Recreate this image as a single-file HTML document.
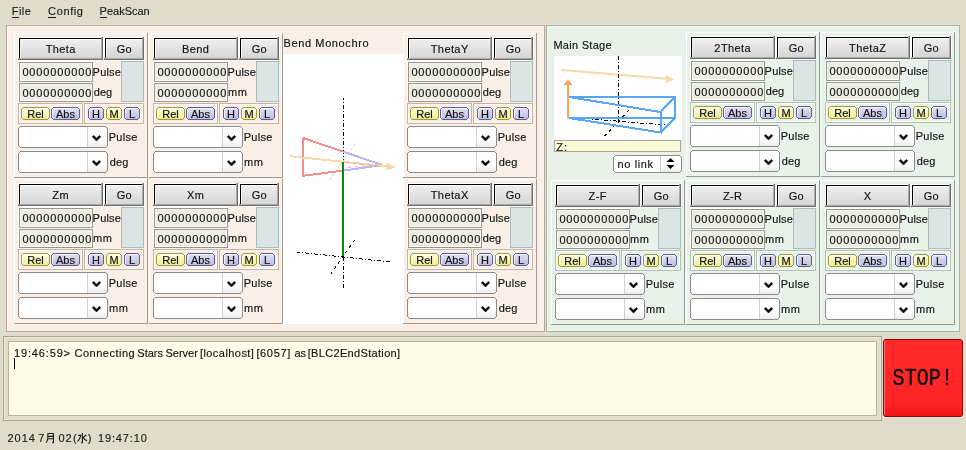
<!DOCTYPE html>
<html><head><meta charset="utf-8"><title>Stars Motor Control</title>
<style>html,body{margin:0;padding:0;background:#dfdcca;width:966px;height:450px;overflow:hidden;}svg{display:block;will-change:transform;}</style>
</head><body>
<svg width="966" height="450" viewBox="0 0 966 450" font-family='"Liberation Sans", sans-serif' shape-rendering="auto"><defs>
<linearGradient id="gBtn" x1="0" y1="0" x2="0" y2="1"><stop offset="0" stop-color="#f1f1f1"/><stop offset="1" stop-color="#d3d3d3"/></linearGradient>
<linearGradient id="gYel" x1="0" y1="0" x2="0" y2="1"><stop offset="0" stop-color="#fdfde2"/><stop offset="1" stop-color="#eeec98"/></linearGradient>
<linearGradient id="gBlu" x1="0" y1="0" x2="0" y2="1"><stop offset="0" stop-color="#e2e2f2"/><stop offset="1" stop-color="#bebedd"/></linearGradient>
<linearGradient id="gCmb" x1="0" y1="0" x2="0" y2="1"><stop offset="0" stop-color="#ffffff"/><stop offset="0.6" stop-color="#ffffff"/><stop offset="1" stop-color="#ececec"/></linearGradient>
<linearGradient id="gStop" x1="0" y1="0" x2="0" y2="1"><stop offset="0" stop-color="#ff2b2b"/><stop offset="0.85" stop-color="#ff2424"/><stop offset="1" stop-color="#f31414"/></linearGradient>
</defs><rect x="0" y="0" width="966" height="450" fill="#dfdcca"/>
<text x="11.8" y="15" font-size="11" fill="#1a1a1a" stroke="#1a1a1a" stroke-width="0.15" letter-spacing="0.43">File</text>
<text x="48.1" y="15" font-size="11" fill="#1a1a1a" stroke="#1a1a1a" stroke-width="0.15" letter-spacing="0.62">Config</text>
<text x="99.6" y="15" font-size="11" fill="#1a1a1a" stroke="#1a1a1a" stroke-width="0.15" letter-spacing="0">PeakScan</text>
<rect x="12" y="17" width="7" height="1" fill="#1a1a1a"/>
<rect x="48" y="17" width="8" height="1" fill="#1a1a1a"/>
<rect x="100" y="17" width="7" height="1" fill="#1a1a1a"/>
<rect x="6" y="24" width="954" height="1" fill="#e4e0d0"/>
<rect x="6" y="25" width="539" height="307" fill="#baa89b"/>
<rect x="7" y="26" width="537" height="305" fill="#fcf4ec"/>
<rect x="8" y="27" width="535" height="303" fill="#f9efe6"/>
<rect x="546" y="25" width="414" height="307" fill="#a3b5a9"/>
<rect x="547" y="26" width="412" height="305" fill="#eef7ee"/>
<rect x="548" y="27" width="410" height="303" fill="#e9f2e9"/>
<rect x="14" y="33" width="134" height="145" fill="#a59a91"/>
<rect x="14" y="33" width="133" height="144" fill="#ffffff"/>
<rect x="15" y="34" width="132" height="143" fill="#f9efe6"/>
<rect x="18" y="37" width="86" height="24" fill="rgba(255,255,255,0.55)"/>
<rect x="18" y="37" width="85" height="23" fill="#ffffff"/>
<rect x="19" y="38" width="84" height="22" fill="url(#gBtn)"/>
<rect x="19" y="38" width="82" height="1" fill="#000000"/>
<rect x="19" y="38" width="1" height="20" fill="#000000"/>
<rect x="20" y="39" width="81" height="1" fill="#ffffff"/>
<rect x="20" y="39" width="1" height="19" fill="#f4f4f4"/>
<rect x="101" y="37" width="1" height="23" fill="#a9a9a9"/>
<rect x="18" y="58" width="85" height="1" fill="#a9a9a9"/>
<rect x="102" y="37" width="1" height="23" fill="#6f6f6f"/>
<rect x="18" y="59" width="85" height="1" fill="#6f6f6f"/>
<text x="60.7" y="53" font-size="11" fill="#111111" stroke="#111111" stroke-width="0.15" text-anchor="middle" letter-spacing="0.4">Theta</text>
<rect x="104" y="37" width="41" height="24" fill="rgba(255,255,255,0.55)"/>
<rect x="104" y="37" width="40" height="23" fill="#ffffff"/>
<rect x="105" y="38" width="39" height="22" fill="url(#gBtn)"/>
<rect x="105" y="38" width="37" height="1" fill="#000000"/>
<rect x="105" y="38" width="1" height="20" fill="#000000"/>
<rect x="106" y="39" width="36" height="1" fill="#ffffff"/>
<rect x="106" y="39" width="1" height="19" fill="#f4f4f4"/>
<rect x="142" y="37" width="1" height="23" fill="#a9a9a9"/>
<rect x="104" y="58" width="40" height="1" fill="#a9a9a9"/>
<rect x="143" y="37" width="1" height="23" fill="#6f6f6f"/>
<rect x="104" y="59" width="40" height="1" fill="#6f6f6f"/>
<text x="124.2" y="53" font-size="11" fill="#111111" stroke="#111111" stroke-width="0.15" text-anchor="middle" letter-spacing="0">Go</text>
<rect x="18" y="61" width="75" height="21" fill="#ffffff"/>
<rect x="19" y="62" width="74" height="20" fill="#9d948b"/>
<rect x="20" y="63" width="72" height="18" fill="#ffffff"/>
<rect x="20" y="63" width="71" height="17" fill="#f4f0ea"/>
<rect x="21" y="64" width="70" height="16" fill="#edede4"/>
<text x="22.4" y="76" font-size="11" fill="#111111" stroke="#111111" stroke-width="0.15" letter-spacing="0.86">0000000000</text>
<rect x="18" y="82" width="75" height="20" fill="#ffffff"/>
<rect x="19" y="83" width="74" height="19" fill="#9d948b"/>
<rect x="20" y="84" width="72" height="17" fill="#ffffff"/>
<rect x="20" y="84" width="71" height="16" fill="#f4f0ea"/>
<rect x="21" y="85" width="70" height="15" fill="#edede4"/>
<text x="22.4" y="97" font-size="11" fill="#111111" stroke="#111111" stroke-width="0.15" letter-spacing="0.86">0000000000</text>
<text x="92.6" y="75.7" font-size="11" fill="#111111" stroke="#111111" stroke-width="0.15" letter-spacing="0.2">Pulse</text>
<text x="93.7" y="96.3" font-size="11" fill="#111111" stroke="#111111" stroke-width="0.15" letter-spacing="0.1">deg</text>
<rect x="121" y="61" width="23" height="41" fill="#aabdbd"/>
<rect x="122" y="62" width="21" height="39" fill="#dce5e5"/>
<rect x="18" y="103" width="65" height="21" fill="#c4b3a6"/>
<rect x="19" y="104" width="63" height="19" fill="#fffaf3"/>
<rect x="20" y="105" width="61" height="17" fill="#f9efe6"/>
<rect x="84" y="103" width="60" height="21" fill="#c4b3a6"/>
<rect x="85" y="104" width="58" height="19" fill="#fffaf3"/>
<rect x="86" y="105" width="56" height="17" fill="#f9efe6"/>
<rect x="23" y="107" width="25" height="1" fill="#9c9b34"/>
<rect x="23" y="119" width="25" height="1" fill="#9c9b34"/>
<rect x="21" y="109" width="1" height="9" fill="#9c9b34"/>
<rect x="49" y="109" width="1" height="9" fill="#9c9b34"/>
<rect x="22" y="108" width="1" height="1" fill="#9c9b34"/>
<rect x="48" y="108" width="1" height="1" fill="#9c9b34"/>
<rect x="22" y="118" width="1" height="1" fill="#9c9b34"/>
<rect x="48" y="118" width="1" height="1" fill="#9c9b34"/>
<path d="M23 108H48V109H49V118H48V119H23V118H22V109H23Z" fill="url(#gYel)"/>
<rect x="23" y="108" width="25" height="1" fill="rgba(255,255,255,0.7)"/>
<rect x="22" y="109" width="1" height="9" fill="rgba(255,255,255,0.7)"/>
<text x="35.5" y="118" font-size="11" fill="#101010" stroke="#101010" stroke-width="0.15" text-anchor="middle">Rel</text>
<rect x="53" y="107" width="25" height="1" fill="#5f5f97"/>
<rect x="53" y="119" width="25" height="1" fill="#5f5f97"/>
<rect x="51" y="109" width="1" height="9" fill="#5f5f97"/>
<rect x="79" y="109" width="1" height="9" fill="#5f5f97"/>
<rect x="52" y="108" width="1" height="1" fill="#5f5f97"/>
<rect x="78" y="108" width="1" height="1" fill="#5f5f97"/>
<rect x="52" y="118" width="1" height="1" fill="#5f5f97"/>
<rect x="78" y="118" width="1" height="1" fill="#5f5f97"/>
<path d="M53 108H78V109H79V118H78V119H53V118H52V109H53Z" fill="url(#gBlu)"/>
<rect x="53" y="108" width="25" height="1" fill="rgba(255,255,255,0.7)"/>
<rect x="52" y="109" width="1" height="9" fill="rgba(255,255,255,0.7)"/>
<text x="65.5" y="118" font-size="11" fill="#101010" stroke="#101010" stroke-width="0.15" text-anchor="middle">Abs</text>
<rect x="90" y="107" width="12" height="1" fill="#5f5f97"/>
<rect x="90" y="119" width="12" height="1" fill="#5f5f97"/>
<rect x="88" y="109" width="1" height="9" fill="#5f5f97"/>
<rect x="103" y="109" width="1" height="9" fill="#5f5f97"/>
<rect x="89" y="108" width="1" height="1" fill="#5f5f97"/>
<rect x="102" y="108" width="1" height="1" fill="#5f5f97"/>
<rect x="89" y="118" width="1" height="1" fill="#5f5f97"/>
<rect x="102" y="118" width="1" height="1" fill="#5f5f97"/>
<path d="M90 108H102V109H103V118H102V119H90V118H89V109H90Z" fill="url(#gBlu)"/>
<rect x="90" y="108" width="12" height="1" fill="rgba(255,255,255,0.7)"/>
<rect x="89" y="109" width="1" height="9" fill="rgba(255,255,255,0.7)"/>
<text x="96.0" y="118" font-size="11" fill="#101010" stroke="#101010" stroke-width="0.15" text-anchor="middle">H</text>
<rect x="108" y="107" width="12" height="1" fill="#9c9b34"/>
<rect x="108" y="119" width="12" height="1" fill="#9c9b34"/>
<rect x="106" y="109" width="1" height="9" fill="#9c9b34"/>
<rect x="121" y="109" width="1" height="9" fill="#9c9b34"/>
<rect x="107" y="108" width="1" height="1" fill="#9c9b34"/>
<rect x="120" y="108" width="1" height="1" fill="#9c9b34"/>
<rect x="107" y="118" width="1" height="1" fill="#9c9b34"/>
<rect x="120" y="118" width="1" height="1" fill="#9c9b34"/>
<path d="M108 108H120V109H121V118H120V119H108V118H107V109H108Z" fill="url(#gYel)"/>
<rect x="108" y="108" width="12" height="1" fill="rgba(255,255,255,0.7)"/>
<rect x="107" y="109" width="1" height="9" fill="rgba(255,255,255,0.7)"/>
<text x="114.0" y="118" font-size="11" fill="#101010" stroke="#101010" stroke-width="0.15" text-anchor="middle">M</text>
<rect x="126" y="107" width="12" height="1" fill="#5f5f97"/>
<rect x="126" y="119" width="12" height="1" fill="#5f5f97"/>
<rect x="124" y="109" width="1" height="9" fill="#5f5f97"/>
<rect x="139" y="109" width="1" height="9" fill="#5f5f97"/>
<rect x="125" y="108" width="1" height="1" fill="#5f5f97"/>
<rect x="138" y="108" width="1" height="1" fill="#5f5f97"/>
<rect x="125" y="118" width="1" height="1" fill="#5f5f97"/>
<rect x="138" y="118" width="1" height="1" fill="#5f5f97"/>
<path d="M126 108H138V109H139V118H138V119H126V118H125V109H126Z" fill="url(#gBlu)"/>
<rect x="126" y="108" width="12" height="1" fill="rgba(255,255,255,0.7)"/>
<rect x="125" y="109" width="1" height="9" fill="rgba(255,255,255,0.7)"/>
<text x="132.0" y="118" font-size="11" fill="#101010" stroke="#101010" stroke-width="0.15" text-anchor="middle">L</text>
<path d="M20 127H106V128H107V146H106V147H20V146H19V128H20Z" fill="url(#gCmb)"/>
<rect x="19" y="127" width="68" height="20" fill="#ffffff"/>
<rect x="20" y="126" width="86" height="1" fill="#8b8b8b"/>
<rect x="20" y="147" width="86" height="1" fill="#8b8b8b"/>
<rect x="18" y="128" width="1" height="18" fill="#8b8b8b"/>
<rect x="107" y="128" width="1" height="18" fill="#8b8b8b"/>
<rect x="19" y="127" width="1" height="1" fill="#8b8b8b"/>
<rect x="106" y="127" width="1" height="1" fill="#8b8b8b"/>
<rect x="19" y="146" width="1" height="1" fill="#8b8b8b"/>
<rect x="106" y="146" width="1" height="1" fill="#8b8b8b"/>
<rect x="87" y="127" width="1" height="20" fill="#d0d0d0"/>
<path d="M92.3 136.8L93.7 135.4L96.5 138.2L99.3 135.4L100.7 136.8L96.5 141Z" fill="#000" stroke="#000" stroke-width="0.6" stroke-linejoin="round"/>
<path d="M20 152H106V153H107V171H106V172H20V171H19V153H20Z" fill="url(#gCmb)"/>
<rect x="19" y="152" width="68" height="20" fill="#ffffff"/>
<rect x="20" y="151" width="86" height="1" fill="#8b8b8b"/>
<rect x="20" y="172" width="86" height="1" fill="#8b8b8b"/>
<rect x="18" y="153" width="1" height="18" fill="#8b8b8b"/>
<rect x="107" y="153" width="1" height="18" fill="#8b8b8b"/>
<rect x="19" y="152" width="1" height="1" fill="#8b8b8b"/>
<rect x="106" y="152" width="1" height="1" fill="#8b8b8b"/>
<rect x="19" y="171" width="1" height="1" fill="#8b8b8b"/>
<rect x="106" y="171" width="1" height="1" fill="#8b8b8b"/>
<rect x="87" y="152" width="1" height="20" fill="#d0d0d0"/>
<path d="M92.3 161.8L93.7 160.4L96.5 163.2L99.3 160.4L100.7 161.8L96.5 166Z" fill="#000" stroke="#000" stroke-width="0.6" stroke-linejoin="round"/>
<text x="108.7" y="140.8" font-size="11" fill="#111111" stroke="#111111" stroke-width="0.15" letter-spacing="0.3">Pulse</text>
<text x="109.8" y="165.8" font-size="11" fill="#111111" stroke="#111111" stroke-width="0.15" letter-spacing="0.1">deg</text>
<rect x="149" y="33" width="134" height="145" fill="#a59a91"/>
<rect x="149" y="33" width="133" height="144" fill="#ffffff"/>
<rect x="150" y="34" width="132" height="143" fill="#f9efe6"/>
<rect x="153" y="37" width="86" height="24" fill="rgba(255,255,255,0.55)"/>
<rect x="153" y="37" width="85" height="23" fill="#ffffff"/>
<rect x="154" y="38" width="84" height="22" fill="url(#gBtn)"/>
<rect x="154" y="38" width="82" height="1" fill="#000000"/>
<rect x="154" y="38" width="1" height="20" fill="#000000"/>
<rect x="155" y="39" width="81" height="1" fill="#ffffff"/>
<rect x="155" y="39" width="1" height="19" fill="#f4f4f4"/>
<rect x="236" y="37" width="1" height="23" fill="#a9a9a9"/>
<rect x="153" y="58" width="85" height="1" fill="#a9a9a9"/>
<rect x="237" y="37" width="1" height="23" fill="#6f6f6f"/>
<rect x="153" y="59" width="85" height="1" fill="#6f6f6f"/>
<text x="195.7" y="53" font-size="11" fill="#111111" stroke="#111111" stroke-width="0.15" text-anchor="middle" letter-spacing="0.4">Bend</text>
<rect x="239" y="37" width="41" height="24" fill="rgba(255,255,255,0.55)"/>
<rect x="239" y="37" width="40" height="23" fill="#ffffff"/>
<rect x="240" y="38" width="39" height="22" fill="url(#gBtn)"/>
<rect x="240" y="38" width="37" height="1" fill="#000000"/>
<rect x="240" y="38" width="1" height="20" fill="#000000"/>
<rect x="241" y="39" width="36" height="1" fill="#ffffff"/>
<rect x="241" y="39" width="1" height="19" fill="#f4f4f4"/>
<rect x="277" y="37" width="1" height="23" fill="#a9a9a9"/>
<rect x="239" y="58" width="40" height="1" fill="#a9a9a9"/>
<rect x="278" y="37" width="1" height="23" fill="#6f6f6f"/>
<rect x="239" y="59" width="40" height="1" fill="#6f6f6f"/>
<text x="259.2" y="53" font-size="11" fill="#111111" stroke="#111111" stroke-width="0.15" text-anchor="middle" letter-spacing="0">Go</text>
<rect x="153" y="61" width="75" height="21" fill="#ffffff"/>
<rect x="154" y="62" width="74" height="20" fill="#9d948b"/>
<rect x="155" y="63" width="72" height="18" fill="#ffffff"/>
<rect x="155" y="63" width="71" height="17" fill="#f4f0ea"/>
<rect x="156" y="64" width="70" height="16" fill="#edede4"/>
<text x="157.4" y="76" font-size="11" fill="#111111" stroke="#111111" stroke-width="0.15" letter-spacing="0.86">0000000000</text>
<rect x="153" y="82" width="75" height="20" fill="#ffffff"/>
<rect x="154" y="83" width="74" height="19" fill="#9d948b"/>
<rect x="155" y="84" width="72" height="17" fill="#ffffff"/>
<rect x="155" y="84" width="71" height="16" fill="#f4f0ea"/>
<rect x="156" y="85" width="70" height="15" fill="#edede4"/>
<text x="157.4" y="97" font-size="11" fill="#111111" stroke="#111111" stroke-width="0.15" letter-spacing="0.86">0000000000</text>
<text x="227.6" y="75.7" font-size="11" fill="#111111" stroke="#111111" stroke-width="0.15" letter-spacing="0.2">Pulse</text>
<text x="227.9" y="96.3" font-size="11" fill="#111111" stroke="#111111" stroke-width="0.15" letter-spacing="0.6">mm</text>
<rect x="256" y="61" width="23" height="41" fill="#aabdbd"/>
<rect x="257" y="62" width="21" height="39" fill="#dce5e5"/>
<rect x="153" y="103" width="65" height="21" fill="#c4b3a6"/>
<rect x="154" y="104" width="63" height="19" fill="#fffaf3"/>
<rect x="155" y="105" width="61" height="17" fill="#f9efe6"/>
<rect x="219" y="103" width="60" height="21" fill="#c4b3a6"/>
<rect x="220" y="104" width="58" height="19" fill="#fffaf3"/>
<rect x="221" y="105" width="56" height="17" fill="#f9efe6"/>
<rect x="158" y="107" width="25" height="1" fill="#9c9b34"/>
<rect x="158" y="119" width="25" height="1" fill="#9c9b34"/>
<rect x="156" y="109" width="1" height="9" fill="#9c9b34"/>
<rect x="184" y="109" width="1" height="9" fill="#9c9b34"/>
<rect x="157" y="108" width="1" height="1" fill="#9c9b34"/>
<rect x="183" y="108" width="1" height="1" fill="#9c9b34"/>
<rect x="157" y="118" width="1" height="1" fill="#9c9b34"/>
<rect x="183" y="118" width="1" height="1" fill="#9c9b34"/>
<path d="M158 108H183V109H184V118H183V119H158V118H157V109H158Z" fill="url(#gYel)"/>
<rect x="158" y="108" width="25" height="1" fill="rgba(255,255,255,0.7)"/>
<rect x="157" y="109" width="1" height="9" fill="rgba(255,255,255,0.7)"/>
<text x="170.5" y="118" font-size="11" fill="#101010" stroke="#101010" stroke-width="0.15" text-anchor="middle">Rel</text>
<rect x="188" y="107" width="25" height="1" fill="#5f5f97"/>
<rect x="188" y="119" width="25" height="1" fill="#5f5f97"/>
<rect x="186" y="109" width="1" height="9" fill="#5f5f97"/>
<rect x="214" y="109" width="1" height="9" fill="#5f5f97"/>
<rect x="187" y="108" width="1" height="1" fill="#5f5f97"/>
<rect x="213" y="108" width="1" height="1" fill="#5f5f97"/>
<rect x="187" y="118" width="1" height="1" fill="#5f5f97"/>
<rect x="213" y="118" width="1" height="1" fill="#5f5f97"/>
<path d="M188 108H213V109H214V118H213V119H188V118H187V109H188Z" fill="url(#gBlu)"/>
<rect x="188" y="108" width="25" height="1" fill="rgba(255,255,255,0.7)"/>
<rect x="187" y="109" width="1" height="9" fill="rgba(255,255,255,0.7)"/>
<text x="200.5" y="118" font-size="11" fill="#101010" stroke="#101010" stroke-width="0.15" text-anchor="middle">Abs</text>
<rect x="225" y="107" width="12" height="1" fill="#5f5f97"/>
<rect x="225" y="119" width="12" height="1" fill="#5f5f97"/>
<rect x="223" y="109" width="1" height="9" fill="#5f5f97"/>
<rect x="238" y="109" width="1" height="9" fill="#5f5f97"/>
<rect x="224" y="108" width="1" height="1" fill="#5f5f97"/>
<rect x="237" y="108" width="1" height="1" fill="#5f5f97"/>
<rect x="224" y="118" width="1" height="1" fill="#5f5f97"/>
<rect x="237" y="118" width="1" height="1" fill="#5f5f97"/>
<path d="M225 108H237V109H238V118H237V119H225V118H224V109H225Z" fill="url(#gBlu)"/>
<rect x="225" y="108" width="12" height="1" fill="rgba(255,255,255,0.7)"/>
<rect x="224" y="109" width="1" height="9" fill="rgba(255,255,255,0.7)"/>
<text x="231.0" y="118" font-size="11" fill="#101010" stroke="#101010" stroke-width="0.15" text-anchor="middle">H</text>
<rect x="243" y="107" width="12" height="1" fill="#9c9b34"/>
<rect x="243" y="119" width="12" height="1" fill="#9c9b34"/>
<rect x="241" y="109" width="1" height="9" fill="#9c9b34"/>
<rect x="256" y="109" width="1" height="9" fill="#9c9b34"/>
<rect x="242" y="108" width="1" height="1" fill="#9c9b34"/>
<rect x="255" y="108" width="1" height="1" fill="#9c9b34"/>
<rect x="242" y="118" width="1" height="1" fill="#9c9b34"/>
<rect x="255" y="118" width="1" height="1" fill="#9c9b34"/>
<path d="M243 108H255V109H256V118H255V119H243V118H242V109H243Z" fill="url(#gYel)"/>
<rect x="243" y="108" width="12" height="1" fill="rgba(255,255,255,0.7)"/>
<rect x="242" y="109" width="1" height="9" fill="rgba(255,255,255,0.7)"/>
<text x="249.0" y="118" font-size="11" fill="#101010" stroke="#101010" stroke-width="0.15" text-anchor="middle">M</text>
<rect x="261" y="107" width="12" height="1" fill="#5f5f97"/>
<rect x="261" y="119" width="12" height="1" fill="#5f5f97"/>
<rect x="259" y="109" width="1" height="9" fill="#5f5f97"/>
<rect x="274" y="109" width="1" height="9" fill="#5f5f97"/>
<rect x="260" y="108" width="1" height="1" fill="#5f5f97"/>
<rect x="273" y="108" width="1" height="1" fill="#5f5f97"/>
<rect x="260" y="118" width="1" height="1" fill="#5f5f97"/>
<rect x="273" y="118" width="1" height="1" fill="#5f5f97"/>
<path d="M261 108H273V109H274V118H273V119H261V118H260V109H261Z" fill="url(#gBlu)"/>
<rect x="261" y="108" width="12" height="1" fill="rgba(255,255,255,0.7)"/>
<rect x="260" y="109" width="1" height="9" fill="rgba(255,255,255,0.7)"/>
<text x="267.0" y="118" font-size="11" fill="#101010" stroke="#101010" stroke-width="0.15" text-anchor="middle">L</text>
<path d="M155 127H241V128H242V146H241V147H155V146H154V128H155Z" fill="url(#gCmb)"/>
<rect x="154" y="127" width="68" height="20" fill="#ffffff"/>
<rect x="155" y="126" width="86" height="1" fill="#8b8b8b"/>
<rect x="155" y="147" width="86" height="1" fill="#8b8b8b"/>
<rect x="153" y="128" width="1" height="18" fill="#8b8b8b"/>
<rect x="242" y="128" width="1" height="18" fill="#8b8b8b"/>
<rect x="154" y="127" width="1" height="1" fill="#8b8b8b"/>
<rect x="241" y="127" width="1" height="1" fill="#8b8b8b"/>
<rect x="154" y="146" width="1" height="1" fill="#8b8b8b"/>
<rect x="241" y="146" width="1" height="1" fill="#8b8b8b"/>
<rect x="222" y="127" width="1" height="20" fill="#d0d0d0"/>
<path d="M227.3 136.8L228.7 135.4L231.5 138.2L234.3 135.4L235.7 136.8L231.5 141Z" fill="#000" stroke="#000" stroke-width="0.6" stroke-linejoin="round"/>
<path d="M155 152H241V153H242V171H241V172H155V171H154V153H155Z" fill="url(#gCmb)"/>
<rect x="154" y="152" width="68" height="20" fill="#ffffff"/>
<rect x="155" y="151" width="86" height="1" fill="#8b8b8b"/>
<rect x="155" y="172" width="86" height="1" fill="#8b8b8b"/>
<rect x="153" y="153" width="1" height="18" fill="#8b8b8b"/>
<rect x="242" y="153" width="1" height="18" fill="#8b8b8b"/>
<rect x="154" y="152" width="1" height="1" fill="#8b8b8b"/>
<rect x="241" y="152" width="1" height="1" fill="#8b8b8b"/>
<rect x="154" y="171" width="1" height="1" fill="#8b8b8b"/>
<rect x="241" y="171" width="1" height="1" fill="#8b8b8b"/>
<rect x="222" y="152" width="1" height="20" fill="#d0d0d0"/>
<path d="M227.3 161.8L228.7 160.4L231.5 163.2L234.3 160.4L235.7 161.8L231.5 166Z" fill="#000" stroke="#000" stroke-width="0.6" stroke-linejoin="round"/>
<text x="243.7" y="140.8" font-size="11" fill="#111111" stroke="#111111" stroke-width="0.15" letter-spacing="0.3">Pulse</text>
<text x="244.0" y="165.8" font-size="11" fill="#111111" stroke="#111111" stroke-width="0.15" letter-spacing="0.6">mm</text>
<rect x="403" y="33" width="134" height="145" fill="#a59a91"/>
<rect x="403" y="33" width="133" height="144" fill="#ffffff"/>
<rect x="404" y="34" width="132" height="143" fill="#f9efe6"/>
<rect x="407" y="37" width="86" height="24" fill="rgba(255,255,255,0.55)"/>
<rect x="407" y="37" width="85" height="23" fill="#ffffff"/>
<rect x="408" y="38" width="84" height="22" fill="url(#gBtn)"/>
<rect x="408" y="38" width="82" height="1" fill="#000000"/>
<rect x="408" y="38" width="1" height="20" fill="#000000"/>
<rect x="409" y="39" width="81" height="1" fill="#ffffff"/>
<rect x="409" y="39" width="1" height="19" fill="#f4f4f4"/>
<rect x="490" y="37" width="1" height="23" fill="#a9a9a9"/>
<rect x="407" y="58" width="85" height="1" fill="#a9a9a9"/>
<rect x="491" y="37" width="1" height="23" fill="#6f6f6f"/>
<rect x="407" y="59" width="85" height="1" fill="#6f6f6f"/>
<text x="449.7" y="53" font-size="11" fill="#111111" stroke="#111111" stroke-width="0.15" text-anchor="middle" letter-spacing="0.4">ThetaY</text>
<rect x="493" y="37" width="41" height="24" fill="rgba(255,255,255,0.55)"/>
<rect x="493" y="37" width="40" height="23" fill="#ffffff"/>
<rect x="494" y="38" width="39" height="22" fill="url(#gBtn)"/>
<rect x="494" y="38" width="37" height="1" fill="#000000"/>
<rect x="494" y="38" width="1" height="20" fill="#000000"/>
<rect x="495" y="39" width="36" height="1" fill="#ffffff"/>
<rect x="495" y="39" width="1" height="19" fill="#f4f4f4"/>
<rect x="531" y="37" width="1" height="23" fill="#a9a9a9"/>
<rect x="493" y="58" width="40" height="1" fill="#a9a9a9"/>
<rect x="532" y="37" width="1" height="23" fill="#6f6f6f"/>
<rect x="493" y="59" width="40" height="1" fill="#6f6f6f"/>
<text x="513.2" y="53" font-size="11" fill="#111111" stroke="#111111" stroke-width="0.15" text-anchor="middle" letter-spacing="0">Go</text>
<rect x="407" y="61" width="75" height="21" fill="#ffffff"/>
<rect x="408" y="62" width="74" height="20" fill="#9d948b"/>
<rect x="409" y="63" width="72" height="18" fill="#ffffff"/>
<rect x="409" y="63" width="71" height="17" fill="#f4f0ea"/>
<rect x="410" y="64" width="70" height="16" fill="#edede4"/>
<text x="411.4" y="76" font-size="11" fill="#111111" stroke="#111111" stroke-width="0.15" letter-spacing="0.86">0000000000</text>
<rect x="407" y="82" width="75" height="20" fill="#ffffff"/>
<rect x="408" y="83" width="74" height="19" fill="#9d948b"/>
<rect x="409" y="84" width="72" height="17" fill="#ffffff"/>
<rect x="409" y="84" width="71" height="16" fill="#f4f0ea"/>
<rect x="410" y="85" width="70" height="15" fill="#edede4"/>
<text x="411.4" y="97" font-size="11" fill="#111111" stroke="#111111" stroke-width="0.15" letter-spacing="0.86">0000000000</text>
<text x="481.6" y="75.7" font-size="11" fill="#111111" stroke="#111111" stroke-width="0.15" letter-spacing="0.2">Pulse</text>
<text x="482.7" y="96.3" font-size="11" fill="#111111" stroke="#111111" stroke-width="0.15" letter-spacing="0.1">deg</text>
<rect x="510" y="61" width="23" height="41" fill="#aabdbd"/>
<rect x="511" y="62" width="21" height="39" fill="#dce5e5"/>
<rect x="407" y="103" width="65" height="21" fill="#c4b3a6"/>
<rect x="408" y="104" width="63" height="19" fill="#fffaf3"/>
<rect x="409" y="105" width="61" height="17" fill="#f9efe6"/>
<rect x="473" y="103" width="60" height="21" fill="#c4b3a6"/>
<rect x="474" y="104" width="58" height="19" fill="#fffaf3"/>
<rect x="475" y="105" width="56" height="17" fill="#f9efe6"/>
<rect x="412" y="107" width="25" height="1" fill="#9c9b34"/>
<rect x="412" y="119" width="25" height="1" fill="#9c9b34"/>
<rect x="410" y="109" width="1" height="9" fill="#9c9b34"/>
<rect x="438" y="109" width="1" height="9" fill="#9c9b34"/>
<rect x="411" y="108" width="1" height="1" fill="#9c9b34"/>
<rect x="437" y="108" width="1" height="1" fill="#9c9b34"/>
<rect x="411" y="118" width="1" height="1" fill="#9c9b34"/>
<rect x="437" y="118" width="1" height="1" fill="#9c9b34"/>
<path d="M412 108H437V109H438V118H437V119H412V118H411V109H412Z" fill="url(#gYel)"/>
<rect x="412" y="108" width="25" height="1" fill="rgba(255,255,255,0.7)"/>
<rect x="411" y="109" width="1" height="9" fill="rgba(255,255,255,0.7)"/>
<text x="424.5" y="118" font-size="11" fill="#101010" stroke="#101010" stroke-width="0.15" text-anchor="middle">Rel</text>
<rect x="442" y="107" width="25" height="1" fill="#5f5f97"/>
<rect x="442" y="119" width="25" height="1" fill="#5f5f97"/>
<rect x="440" y="109" width="1" height="9" fill="#5f5f97"/>
<rect x="468" y="109" width="1" height="9" fill="#5f5f97"/>
<rect x="441" y="108" width="1" height="1" fill="#5f5f97"/>
<rect x="467" y="108" width="1" height="1" fill="#5f5f97"/>
<rect x="441" y="118" width="1" height="1" fill="#5f5f97"/>
<rect x="467" y="118" width="1" height="1" fill="#5f5f97"/>
<path d="M442 108H467V109H468V118H467V119H442V118H441V109H442Z" fill="url(#gBlu)"/>
<rect x="442" y="108" width="25" height="1" fill="rgba(255,255,255,0.7)"/>
<rect x="441" y="109" width="1" height="9" fill="rgba(255,255,255,0.7)"/>
<text x="454.5" y="118" font-size="11" fill="#101010" stroke="#101010" stroke-width="0.15" text-anchor="middle">Abs</text>
<rect x="479" y="107" width="12" height="1" fill="#5f5f97"/>
<rect x="479" y="119" width="12" height="1" fill="#5f5f97"/>
<rect x="477" y="109" width="1" height="9" fill="#5f5f97"/>
<rect x="492" y="109" width="1" height="9" fill="#5f5f97"/>
<rect x="478" y="108" width="1" height="1" fill="#5f5f97"/>
<rect x="491" y="108" width="1" height="1" fill="#5f5f97"/>
<rect x="478" y="118" width="1" height="1" fill="#5f5f97"/>
<rect x="491" y="118" width="1" height="1" fill="#5f5f97"/>
<path d="M479 108H491V109H492V118H491V119H479V118H478V109H479Z" fill="url(#gBlu)"/>
<rect x="479" y="108" width="12" height="1" fill="rgba(255,255,255,0.7)"/>
<rect x="478" y="109" width="1" height="9" fill="rgba(255,255,255,0.7)"/>
<text x="485.0" y="118" font-size="11" fill="#101010" stroke="#101010" stroke-width="0.15" text-anchor="middle">H</text>
<rect x="497" y="107" width="12" height="1" fill="#9c9b34"/>
<rect x="497" y="119" width="12" height="1" fill="#9c9b34"/>
<rect x="495" y="109" width="1" height="9" fill="#9c9b34"/>
<rect x="510" y="109" width="1" height="9" fill="#9c9b34"/>
<rect x="496" y="108" width="1" height="1" fill="#9c9b34"/>
<rect x="509" y="108" width="1" height="1" fill="#9c9b34"/>
<rect x="496" y="118" width="1" height="1" fill="#9c9b34"/>
<rect x="509" y="118" width="1" height="1" fill="#9c9b34"/>
<path d="M497 108H509V109H510V118H509V119H497V118H496V109H497Z" fill="url(#gYel)"/>
<rect x="497" y="108" width="12" height="1" fill="rgba(255,255,255,0.7)"/>
<rect x="496" y="109" width="1" height="9" fill="rgba(255,255,255,0.7)"/>
<text x="503.0" y="118" font-size="11" fill="#101010" stroke="#101010" stroke-width="0.15" text-anchor="middle">M</text>
<rect x="515" y="107" width="12" height="1" fill="#5f5f97"/>
<rect x="515" y="119" width="12" height="1" fill="#5f5f97"/>
<rect x="513" y="109" width="1" height="9" fill="#5f5f97"/>
<rect x="528" y="109" width="1" height="9" fill="#5f5f97"/>
<rect x="514" y="108" width="1" height="1" fill="#5f5f97"/>
<rect x="527" y="108" width="1" height="1" fill="#5f5f97"/>
<rect x="514" y="118" width="1" height="1" fill="#5f5f97"/>
<rect x="527" y="118" width="1" height="1" fill="#5f5f97"/>
<path d="M515 108H527V109H528V118H527V119H515V118H514V109H515Z" fill="url(#gBlu)"/>
<rect x="515" y="108" width="12" height="1" fill="rgba(255,255,255,0.7)"/>
<rect x="514" y="109" width="1" height="9" fill="rgba(255,255,255,0.7)"/>
<text x="521.0" y="118" font-size="11" fill="#101010" stroke="#101010" stroke-width="0.15" text-anchor="middle">L</text>
<path d="M409 127H495V128H496V146H495V147H409V146H408V128H409Z" fill="url(#gCmb)"/>
<rect x="408" y="127" width="68" height="20" fill="#ffffff"/>
<rect x="409" y="126" width="86" height="1" fill="#8b8b8b"/>
<rect x="409" y="147" width="86" height="1" fill="#8b8b8b"/>
<rect x="407" y="128" width="1" height="18" fill="#8b8b8b"/>
<rect x="496" y="128" width="1" height="18" fill="#8b8b8b"/>
<rect x="408" y="127" width="1" height="1" fill="#8b8b8b"/>
<rect x="495" y="127" width="1" height="1" fill="#8b8b8b"/>
<rect x="408" y="146" width="1" height="1" fill="#8b8b8b"/>
<rect x="495" y="146" width="1" height="1" fill="#8b8b8b"/>
<rect x="476" y="127" width="1" height="20" fill="#d0d0d0"/>
<path d="M481.3 136.8L482.7 135.4L485.5 138.2L488.3 135.4L489.7 136.8L485.5 141Z" fill="#000" stroke="#000" stroke-width="0.6" stroke-linejoin="round"/>
<path d="M409 152H495V153H496V171H495V172H409V171H408V153H409Z" fill="url(#gCmb)"/>
<rect x="408" y="152" width="68" height="20" fill="#ffffff"/>
<rect x="409" y="151" width="86" height="1" fill="#8b8b8b"/>
<rect x="409" y="172" width="86" height="1" fill="#8b8b8b"/>
<rect x="407" y="153" width="1" height="18" fill="#8b8b8b"/>
<rect x="496" y="153" width="1" height="18" fill="#8b8b8b"/>
<rect x="408" y="152" width="1" height="1" fill="#8b8b8b"/>
<rect x="495" y="152" width="1" height="1" fill="#8b8b8b"/>
<rect x="408" y="171" width="1" height="1" fill="#8b8b8b"/>
<rect x="495" y="171" width="1" height="1" fill="#8b8b8b"/>
<rect x="476" y="152" width="1" height="20" fill="#d0d0d0"/>
<path d="M481.3 161.8L482.7 160.4L485.5 163.2L488.3 160.4L489.7 161.8L485.5 166Z" fill="#000" stroke="#000" stroke-width="0.6" stroke-linejoin="round"/>
<text x="497.7" y="140.8" font-size="11" fill="#111111" stroke="#111111" stroke-width="0.15" letter-spacing="0.3">Pulse</text>
<text x="498.8" y="165.8" font-size="11" fill="#111111" stroke="#111111" stroke-width="0.15" letter-spacing="0.1">deg</text>
<rect x="14" y="179" width="134" height="145" fill="#a59a91"/>
<rect x="14" y="179" width="133" height="144" fill="#ffffff"/>
<rect x="15" y="180" width="132" height="143" fill="#f9efe6"/>
<rect x="18" y="183" width="86" height="24" fill="rgba(255,255,255,0.55)"/>
<rect x="18" y="183" width="85" height="23" fill="#ffffff"/>
<rect x="19" y="184" width="84" height="22" fill="url(#gBtn)"/>
<rect x="19" y="184" width="82" height="1" fill="#000000"/>
<rect x="19" y="184" width="1" height="20" fill="#000000"/>
<rect x="20" y="185" width="81" height="1" fill="#ffffff"/>
<rect x="20" y="185" width="1" height="19" fill="#f4f4f4"/>
<rect x="101" y="183" width="1" height="23" fill="#a9a9a9"/>
<rect x="18" y="204" width="85" height="1" fill="#a9a9a9"/>
<rect x="102" y="183" width="1" height="23" fill="#6f6f6f"/>
<rect x="18" y="205" width="85" height="1" fill="#6f6f6f"/>
<text x="60.7" y="199" font-size="11" fill="#111111" stroke="#111111" stroke-width="0.15" text-anchor="middle" letter-spacing="0.4">Zm</text>
<rect x="104" y="183" width="41" height="24" fill="rgba(255,255,255,0.55)"/>
<rect x="104" y="183" width="40" height="23" fill="#ffffff"/>
<rect x="105" y="184" width="39" height="22" fill="url(#gBtn)"/>
<rect x="105" y="184" width="37" height="1" fill="#000000"/>
<rect x="105" y="184" width="1" height="20" fill="#000000"/>
<rect x="106" y="185" width="36" height="1" fill="#ffffff"/>
<rect x="106" y="185" width="1" height="19" fill="#f4f4f4"/>
<rect x="142" y="183" width="1" height="23" fill="#a9a9a9"/>
<rect x="104" y="204" width="40" height="1" fill="#a9a9a9"/>
<rect x="143" y="183" width="1" height="23" fill="#6f6f6f"/>
<rect x="104" y="205" width="40" height="1" fill="#6f6f6f"/>
<text x="124.2" y="199" font-size="11" fill="#111111" stroke="#111111" stroke-width="0.15" text-anchor="middle" letter-spacing="0">Go</text>
<rect x="18" y="207" width="75" height="21" fill="#ffffff"/>
<rect x="19" y="208" width="74" height="20" fill="#9d948b"/>
<rect x="20" y="209" width="72" height="18" fill="#ffffff"/>
<rect x="20" y="209" width="71" height="17" fill="#f4f0ea"/>
<rect x="21" y="210" width="70" height="16" fill="#edede4"/>
<text x="22.4" y="222" font-size="11" fill="#111111" stroke="#111111" stroke-width="0.15" letter-spacing="0.86">0000000000</text>
<rect x="18" y="228" width="75" height="20" fill="#ffffff"/>
<rect x="19" y="229" width="74" height="19" fill="#9d948b"/>
<rect x="20" y="230" width="72" height="17" fill="#ffffff"/>
<rect x="20" y="230" width="71" height="16" fill="#f4f0ea"/>
<rect x="21" y="231" width="70" height="15" fill="#edede4"/>
<text x="22.4" y="243" font-size="11" fill="#111111" stroke="#111111" stroke-width="0.15" letter-spacing="0.86">0000000000</text>
<text x="92.6" y="221.7" font-size="11" fill="#111111" stroke="#111111" stroke-width="0.15" letter-spacing="0.2">Pulse</text>
<text x="92.9" y="242.3" font-size="11" fill="#111111" stroke="#111111" stroke-width="0.15" letter-spacing="0.6">mm</text>
<rect x="121" y="207" width="23" height="41" fill="#aabdbd"/>
<rect x="122" y="208" width="21" height="39" fill="#dce5e5"/>
<rect x="18" y="249" width="65" height="21" fill="#c4b3a6"/>
<rect x="19" y="250" width="63" height="19" fill="#fffaf3"/>
<rect x="20" y="251" width="61" height="17" fill="#f9efe6"/>
<rect x="84" y="249" width="60" height="21" fill="#c4b3a6"/>
<rect x="85" y="250" width="58" height="19" fill="#fffaf3"/>
<rect x="86" y="251" width="56" height="17" fill="#f9efe6"/>
<rect x="23" y="253" width="25" height="1" fill="#9c9b34"/>
<rect x="23" y="265" width="25" height="1" fill="#9c9b34"/>
<rect x="21" y="255" width="1" height="9" fill="#9c9b34"/>
<rect x="49" y="255" width="1" height="9" fill="#9c9b34"/>
<rect x="22" y="254" width="1" height="1" fill="#9c9b34"/>
<rect x="48" y="254" width="1" height="1" fill="#9c9b34"/>
<rect x="22" y="264" width="1" height="1" fill="#9c9b34"/>
<rect x="48" y="264" width="1" height="1" fill="#9c9b34"/>
<path d="M23 254H48V255H49V264H48V265H23V264H22V255H23Z" fill="url(#gYel)"/>
<rect x="23" y="254" width="25" height="1" fill="rgba(255,255,255,0.7)"/>
<rect x="22" y="255" width="1" height="9" fill="rgba(255,255,255,0.7)"/>
<text x="35.5" y="264" font-size="11" fill="#101010" stroke="#101010" stroke-width="0.15" text-anchor="middle">Rel</text>
<rect x="53" y="253" width="25" height="1" fill="#5f5f97"/>
<rect x="53" y="265" width="25" height="1" fill="#5f5f97"/>
<rect x="51" y="255" width="1" height="9" fill="#5f5f97"/>
<rect x="79" y="255" width="1" height="9" fill="#5f5f97"/>
<rect x="52" y="254" width="1" height="1" fill="#5f5f97"/>
<rect x="78" y="254" width="1" height="1" fill="#5f5f97"/>
<rect x="52" y="264" width="1" height="1" fill="#5f5f97"/>
<rect x="78" y="264" width="1" height="1" fill="#5f5f97"/>
<path d="M53 254H78V255H79V264H78V265H53V264H52V255H53Z" fill="url(#gBlu)"/>
<rect x="53" y="254" width="25" height="1" fill="rgba(255,255,255,0.7)"/>
<rect x="52" y="255" width="1" height="9" fill="rgba(255,255,255,0.7)"/>
<text x="65.5" y="264" font-size="11" fill="#101010" stroke="#101010" stroke-width="0.15" text-anchor="middle">Abs</text>
<rect x="90" y="253" width="12" height="1" fill="#5f5f97"/>
<rect x="90" y="265" width="12" height="1" fill="#5f5f97"/>
<rect x="88" y="255" width="1" height="9" fill="#5f5f97"/>
<rect x="103" y="255" width="1" height="9" fill="#5f5f97"/>
<rect x="89" y="254" width="1" height="1" fill="#5f5f97"/>
<rect x="102" y="254" width="1" height="1" fill="#5f5f97"/>
<rect x="89" y="264" width="1" height="1" fill="#5f5f97"/>
<rect x="102" y="264" width="1" height="1" fill="#5f5f97"/>
<path d="M90 254H102V255H103V264H102V265H90V264H89V255H90Z" fill="url(#gBlu)"/>
<rect x="90" y="254" width="12" height="1" fill="rgba(255,255,255,0.7)"/>
<rect x="89" y="255" width="1" height="9" fill="rgba(255,255,255,0.7)"/>
<text x="96.0" y="264" font-size="11" fill="#101010" stroke="#101010" stroke-width="0.15" text-anchor="middle">H</text>
<rect x="108" y="253" width="12" height="1" fill="#9c9b34"/>
<rect x="108" y="265" width="12" height="1" fill="#9c9b34"/>
<rect x="106" y="255" width="1" height="9" fill="#9c9b34"/>
<rect x="121" y="255" width="1" height="9" fill="#9c9b34"/>
<rect x="107" y="254" width="1" height="1" fill="#9c9b34"/>
<rect x="120" y="254" width="1" height="1" fill="#9c9b34"/>
<rect x="107" y="264" width="1" height="1" fill="#9c9b34"/>
<rect x="120" y="264" width="1" height="1" fill="#9c9b34"/>
<path d="M108 254H120V255H121V264H120V265H108V264H107V255H108Z" fill="url(#gYel)"/>
<rect x="108" y="254" width="12" height="1" fill="rgba(255,255,255,0.7)"/>
<rect x="107" y="255" width="1" height="9" fill="rgba(255,255,255,0.7)"/>
<text x="114.0" y="264" font-size="11" fill="#101010" stroke="#101010" stroke-width="0.15" text-anchor="middle">M</text>
<rect x="126" y="253" width="12" height="1" fill="#5f5f97"/>
<rect x="126" y="265" width="12" height="1" fill="#5f5f97"/>
<rect x="124" y="255" width="1" height="9" fill="#5f5f97"/>
<rect x="139" y="255" width="1" height="9" fill="#5f5f97"/>
<rect x="125" y="254" width="1" height="1" fill="#5f5f97"/>
<rect x="138" y="254" width="1" height="1" fill="#5f5f97"/>
<rect x="125" y="264" width="1" height="1" fill="#5f5f97"/>
<rect x="138" y="264" width="1" height="1" fill="#5f5f97"/>
<path d="M126 254H138V255H139V264H138V265H126V264H125V255H126Z" fill="url(#gBlu)"/>
<rect x="126" y="254" width="12" height="1" fill="rgba(255,255,255,0.7)"/>
<rect x="125" y="255" width="1" height="9" fill="rgba(255,255,255,0.7)"/>
<text x="132.0" y="264" font-size="11" fill="#101010" stroke="#101010" stroke-width="0.15" text-anchor="middle">L</text>
<path d="M20 273H106V274H107V292H106V293H20V292H19V274H20Z" fill="url(#gCmb)"/>
<rect x="19" y="273" width="68" height="20" fill="#ffffff"/>
<rect x="20" y="272" width="86" height="1" fill="#8b8b8b"/>
<rect x="20" y="293" width="86" height="1" fill="#8b8b8b"/>
<rect x="18" y="274" width="1" height="18" fill="#8b8b8b"/>
<rect x="107" y="274" width="1" height="18" fill="#8b8b8b"/>
<rect x="19" y="273" width="1" height="1" fill="#8b8b8b"/>
<rect x="106" y="273" width="1" height="1" fill="#8b8b8b"/>
<rect x="19" y="292" width="1" height="1" fill="#8b8b8b"/>
<rect x="106" y="292" width="1" height="1" fill="#8b8b8b"/>
<rect x="87" y="273" width="1" height="20" fill="#d0d0d0"/>
<path d="M92.3 282.8L93.7 281.4L96.5 284.2L99.3 281.4L100.7 282.8L96.5 287Z" fill="#000" stroke="#000" stroke-width="0.6" stroke-linejoin="round"/>
<path d="M20 298H106V299H107V317H106V318H20V317H19V299H20Z" fill="url(#gCmb)"/>
<rect x="19" y="298" width="68" height="20" fill="#ffffff"/>
<rect x="20" y="297" width="86" height="1" fill="#8b8b8b"/>
<rect x="20" y="318" width="86" height="1" fill="#8b8b8b"/>
<rect x="18" y="299" width="1" height="18" fill="#8b8b8b"/>
<rect x="107" y="299" width="1" height="18" fill="#8b8b8b"/>
<rect x="19" y="298" width="1" height="1" fill="#8b8b8b"/>
<rect x="106" y="298" width="1" height="1" fill="#8b8b8b"/>
<rect x="19" y="317" width="1" height="1" fill="#8b8b8b"/>
<rect x="106" y="317" width="1" height="1" fill="#8b8b8b"/>
<rect x="87" y="298" width="1" height="20" fill="#d0d0d0"/>
<path d="M92.3 307.8L93.7 306.4L96.5 309.2L99.3 306.4L100.7 307.8L96.5 312Z" fill="#000" stroke="#000" stroke-width="0.6" stroke-linejoin="round"/>
<text x="108.7" y="286.8" font-size="11" fill="#111111" stroke="#111111" stroke-width="0.15" letter-spacing="0.3">Pulse</text>
<text x="109.0" y="311.8" font-size="11" fill="#111111" stroke="#111111" stroke-width="0.15" letter-spacing="0.6">mm</text>
<rect x="149" y="179" width="134" height="145" fill="#a59a91"/>
<rect x="149" y="179" width="133" height="144" fill="#ffffff"/>
<rect x="150" y="180" width="132" height="143" fill="#f9efe6"/>
<rect x="153" y="183" width="86" height="24" fill="rgba(255,255,255,0.55)"/>
<rect x="153" y="183" width="85" height="23" fill="#ffffff"/>
<rect x="154" y="184" width="84" height="22" fill="url(#gBtn)"/>
<rect x="154" y="184" width="82" height="1" fill="#000000"/>
<rect x="154" y="184" width="1" height="20" fill="#000000"/>
<rect x="155" y="185" width="81" height="1" fill="#ffffff"/>
<rect x="155" y="185" width="1" height="19" fill="#f4f4f4"/>
<rect x="236" y="183" width="1" height="23" fill="#a9a9a9"/>
<rect x="153" y="204" width="85" height="1" fill="#a9a9a9"/>
<rect x="237" y="183" width="1" height="23" fill="#6f6f6f"/>
<rect x="153" y="205" width="85" height="1" fill="#6f6f6f"/>
<text x="195.7" y="199" font-size="11" fill="#111111" stroke="#111111" stroke-width="0.15" text-anchor="middle" letter-spacing="0.4">Xm</text>
<rect x="239" y="183" width="41" height="24" fill="rgba(255,255,255,0.55)"/>
<rect x="239" y="183" width="40" height="23" fill="#ffffff"/>
<rect x="240" y="184" width="39" height="22" fill="url(#gBtn)"/>
<rect x="240" y="184" width="37" height="1" fill="#000000"/>
<rect x="240" y="184" width="1" height="20" fill="#000000"/>
<rect x="241" y="185" width="36" height="1" fill="#ffffff"/>
<rect x="241" y="185" width="1" height="19" fill="#f4f4f4"/>
<rect x="277" y="183" width="1" height="23" fill="#a9a9a9"/>
<rect x="239" y="204" width="40" height="1" fill="#a9a9a9"/>
<rect x="278" y="183" width="1" height="23" fill="#6f6f6f"/>
<rect x="239" y="205" width="40" height="1" fill="#6f6f6f"/>
<text x="259.2" y="199" font-size="11" fill="#111111" stroke="#111111" stroke-width="0.15" text-anchor="middle" letter-spacing="0">Go</text>
<rect x="153" y="207" width="75" height="21" fill="#ffffff"/>
<rect x="154" y="208" width="74" height="20" fill="#9d948b"/>
<rect x="155" y="209" width="72" height="18" fill="#ffffff"/>
<rect x="155" y="209" width="71" height="17" fill="#f4f0ea"/>
<rect x="156" y="210" width="70" height="16" fill="#edede4"/>
<text x="157.4" y="222" font-size="11" fill="#111111" stroke="#111111" stroke-width="0.15" letter-spacing="0.86">0000000000</text>
<rect x="153" y="228" width="75" height="20" fill="#ffffff"/>
<rect x="154" y="229" width="74" height="19" fill="#9d948b"/>
<rect x="155" y="230" width="72" height="17" fill="#ffffff"/>
<rect x="155" y="230" width="71" height="16" fill="#f4f0ea"/>
<rect x="156" y="231" width="70" height="15" fill="#edede4"/>
<text x="157.4" y="243" font-size="11" fill="#111111" stroke="#111111" stroke-width="0.15" letter-spacing="0.86">0000000000</text>
<text x="227.6" y="221.7" font-size="11" fill="#111111" stroke="#111111" stroke-width="0.15" letter-spacing="0.2">Pulse</text>
<text x="227.9" y="242.3" font-size="11" fill="#111111" stroke="#111111" stroke-width="0.15" letter-spacing="0.6">mm</text>
<rect x="256" y="207" width="23" height="41" fill="#aabdbd"/>
<rect x="257" y="208" width="21" height="39" fill="#dce5e5"/>
<rect x="153" y="249" width="65" height="21" fill="#c4b3a6"/>
<rect x="154" y="250" width="63" height="19" fill="#fffaf3"/>
<rect x="155" y="251" width="61" height="17" fill="#f9efe6"/>
<rect x="219" y="249" width="60" height="21" fill="#c4b3a6"/>
<rect x="220" y="250" width="58" height="19" fill="#fffaf3"/>
<rect x="221" y="251" width="56" height="17" fill="#f9efe6"/>
<rect x="158" y="253" width="25" height="1" fill="#9c9b34"/>
<rect x="158" y="265" width="25" height="1" fill="#9c9b34"/>
<rect x="156" y="255" width="1" height="9" fill="#9c9b34"/>
<rect x="184" y="255" width="1" height="9" fill="#9c9b34"/>
<rect x="157" y="254" width="1" height="1" fill="#9c9b34"/>
<rect x="183" y="254" width="1" height="1" fill="#9c9b34"/>
<rect x="157" y="264" width="1" height="1" fill="#9c9b34"/>
<rect x="183" y="264" width="1" height="1" fill="#9c9b34"/>
<path d="M158 254H183V255H184V264H183V265H158V264H157V255H158Z" fill="url(#gYel)"/>
<rect x="158" y="254" width="25" height="1" fill="rgba(255,255,255,0.7)"/>
<rect x="157" y="255" width="1" height="9" fill="rgba(255,255,255,0.7)"/>
<text x="170.5" y="264" font-size="11" fill="#101010" stroke="#101010" stroke-width="0.15" text-anchor="middle">Rel</text>
<rect x="188" y="253" width="25" height="1" fill="#5f5f97"/>
<rect x="188" y="265" width="25" height="1" fill="#5f5f97"/>
<rect x="186" y="255" width="1" height="9" fill="#5f5f97"/>
<rect x="214" y="255" width="1" height="9" fill="#5f5f97"/>
<rect x="187" y="254" width="1" height="1" fill="#5f5f97"/>
<rect x="213" y="254" width="1" height="1" fill="#5f5f97"/>
<rect x="187" y="264" width="1" height="1" fill="#5f5f97"/>
<rect x="213" y="264" width="1" height="1" fill="#5f5f97"/>
<path d="M188 254H213V255H214V264H213V265H188V264H187V255H188Z" fill="url(#gBlu)"/>
<rect x="188" y="254" width="25" height="1" fill="rgba(255,255,255,0.7)"/>
<rect x="187" y="255" width="1" height="9" fill="rgba(255,255,255,0.7)"/>
<text x="200.5" y="264" font-size="11" fill="#101010" stroke="#101010" stroke-width="0.15" text-anchor="middle">Abs</text>
<rect x="225" y="253" width="12" height="1" fill="#5f5f97"/>
<rect x="225" y="265" width="12" height="1" fill="#5f5f97"/>
<rect x="223" y="255" width="1" height="9" fill="#5f5f97"/>
<rect x="238" y="255" width="1" height="9" fill="#5f5f97"/>
<rect x="224" y="254" width="1" height="1" fill="#5f5f97"/>
<rect x="237" y="254" width="1" height="1" fill="#5f5f97"/>
<rect x="224" y="264" width="1" height="1" fill="#5f5f97"/>
<rect x="237" y="264" width="1" height="1" fill="#5f5f97"/>
<path d="M225 254H237V255H238V264H237V265H225V264H224V255H225Z" fill="url(#gBlu)"/>
<rect x="225" y="254" width="12" height="1" fill="rgba(255,255,255,0.7)"/>
<rect x="224" y="255" width="1" height="9" fill="rgba(255,255,255,0.7)"/>
<text x="231.0" y="264" font-size="11" fill="#101010" stroke="#101010" stroke-width="0.15" text-anchor="middle">H</text>
<rect x="243" y="253" width="12" height="1" fill="#9c9b34"/>
<rect x="243" y="265" width="12" height="1" fill="#9c9b34"/>
<rect x="241" y="255" width="1" height="9" fill="#9c9b34"/>
<rect x="256" y="255" width="1" height="9" fill="#9c9b34"/>
<rect x="242" y="254" width="1" height="1" fill="#9c9b34"/>
<rect x="255" y="254" width="1" height="1" fill="#9c9b34"/>
<rect x="242" y="264" width="1" height="1" fill="#9c9b34"/>
<rect x="255" y="264" width="1" height="1" fill="#9c9b34"/>
<path d="M243 254H255V255H256V264H255V265H243V264H242V255H243Z" fill="url(#gYel)"/>
<rect x="243" y="254" width="12" height="1" fill="rgba(255,255,255,0.7)"/>
<rect x="242" y="255" width="1" height="9" fill="rgba(255,255,255,0.7)"/>
<text x="249.0" y="264" font-size="11" fill="#101010" stroke="#101010" stroke-width="0.15" text-anchor="middle">M</text>
<rect x="261" y="253" width="12" height="1" fill="#5f5f97"/>
<rect x="261" y="265" width="12" height="1" fill="#5f5f97"/>
<rect x="259" y="255" width="1" height="9" fill="#5f5f97"/>
<rect x="274" y="255" width="1" height="9" fill="#5f5f97"/>
<rect x="260" y="254" width="1" height="1" fill="#5f5f97"/>
<rect x="273" y="254" width="1" height="1" fill="#5f5f97"/>
<rect x="260" y="264" width="1" height="1" fill="#5f5f97"/>
<rect x="273" y="264" width="1" height="1" fill="#5f5f97"/>
<path d="M261 254H273V255H274V264H273V265H261V264H260V255H261Z" fill="url(#gBlu)"/>
<rect x="261" y="254" width="12" height="1" fill="rgba(255,255,255,0.7)"/>
<rect x="260" y="255" width="1" height="9" fill="rgba(255,255,255,0.7)"/>
<text x="267.0" y="264" font-size="11" fill="#101010" stroke="#101010" stroke-width="0.15" text-anchor="middle">L</text>
<path d="M155 273H241V274H242V292H241V293H155V292H154V274H155Z" fill="url(#gCmb)"/>
<rect x="154" y="273" width="68" height="20" fill="#ffffff"/>
<rect x="155" y="272" width="86" height="1" fill="#8b8b8b"/>
<rect x="155" y="293" width="86" height="1" fill="#8b8b8b"/>
<rect x="153" y="274" width="1" height="18" fill="#8b8b8b"/>
<rect x="242" y="274" width="1" height="18" fill="#8b8b8b"/>
<rect x="154" y="273" width="1" height="1" fill="#8b8b8b"/>
<rect x="241" y="273" width="1" height="1" fill="#8b8b8b"/>
<rect x="154" y="292" width="1" height="1" fill="#8b8b8b"/>
<rect x="241" y="292" width="1" height="1" fill="#8b8b8b"/>
<rect x="222" y="273" width="1" height="20" fill="#d0d0d0"/>
<path d="M227.3 282.8L228.7 281.4L231.5 284.2L234.3 281.4L235.7 282.8L231.5 287Z" fill="#000" stroke="#000" stroke-width="0.6" stroke-linejoin="round"/>
<path d="M155 298H241V299H242V317H241V318H155V317H154V299H155Z" fill="url(#gCmb)"/>
<rect x="154" y="298" width="68" height="20" fill="#ffffff"/>
<rect x="155" y="297" width="86" height="1" fill="#8b8b8b"/>
<rect x="155" y="318" width="86" height="1" fill="#8b8b8b"/>
<rect x="153" y="299" width="1" height="18" fill="#8b8b8b"/>
<rect x="242" y="299" width="1" height="18" fill="#8b8b8b"/>
<rect x="154" y="298" width="1" height="1" fill="#8b8b8b"/>
<rect x="241" y="298" width="1" height="1" fill="#8b8b8b"/>
<rect x="154" y="317" width="1" height="1" fill="#8b8b8b"/>
<rect x="241" y="317" width="1" height="1" fill="#8b8b8b"/>
<rect x="222" y="298" width="1" height="20" fill="#d0d0d0"/>
<path d="M227.3 307.8L228.7 306.4L231.5 309.2L234.3 306.4L235.7 307.8L231.5 312Z" fill="#000" stroke="#000" stroke-width="0.6" stroke-linejoin="round"/>
<text x="243.7" y="286.8" font-size="11" fill="#111111" stroke="#111111" stroke-width="0.15" letter-spacing="0.3">Pulse</text>
<text x="244.0" y="311.8" font-size="11" fill="#111111" stroke="#111111" stroke-width="0.15" letter-spacing="0.6">mm</text>
<rect x="403" y="179" width="134" height="145" fill="#a59a91"/>
<rect x="403" y="179" width="133" height="144" fill="#ffffff"/>
<rect x="404" y="180" width="132" height="143" fill="#f9efe6"/>
<rect x="407" y="183" width="86" height="24" fill="rgba(255,255,255,0.55)"/>
<rect x="407" y="183" width="85" height="23" fill="#ffffff"/>
<rect x="408" y="184" width="84" height="22" fill="url(#gBtn)"/>
<rect x="408" y="184" width="82" height="1" fill="#000000"/>
<rect x="408" y="184" width="1" height="20" fill="#000000"/>
<rect x="409" y="185" width="81" height="1" fill="#ffffff"/>
<rect x="409" y="185" width="1" height="19" fill="#f4f4f4"/>
<rect x="490" y="183" width="1" height="23" fill="#a9a9a9"/>
<rect x="407" y="204" width="85" height="1" fill="#a9a9a9"/>
<rect x="491" y="183" width="1" height="23" fill="#6f6f6f"/>
<rect x="407" y="205" width="85" height="1" fill="#6f6f6f"/>
<text x="449.7" y="199" font-size="11" fill="#111111" stroke="#111111" stroke-width="0.15" text-anchor="middle" letter-spacing="0.4">ThetaX</text>
<rect x="493" y="183" width="41" height="24" fill="rgba(255,255,255,0.55)"/>
<rect x="493" y="183" width="40" height="23" fill="#ffffff"/>
<rect x="494" y="184" width="39" height="22" fill="url(#gBtn)"/>
<rect x="494" y="184" width="37" height="1" fill="#000000"/>
<rect x="494" y="184" width="1" height="20" fill="#000000"/>
<rect x="495" y="185" width="36" height="1" fill="#ffffff"/>
<rect x="495" y="185" width="1" height="19" fill="#f4f4f4"/>
<rect x="531" y="183" width="1" height="23" fill="#a9a9a9"/>
<rect x="493" y="204" width="40" height="1" fill="#a9a9a9"/>
<rect x="532" y="183" width="1" height="23" fill="#6f6f6f"/>
<rect x="493" y="205" width="40" height="1" fill="#6f6f6f"/>
<text x="513.2" y="199" font-size="11" fill="#111111" stroke="#111111" stroke-width="0.15" text-anchor="middle" letter-spacing="0">Go</text>
<rect x="407" y="207" width="75" height="21" fill="#ffffff"/>
<rect x="408" y="208" width="74" height="20" fill="#9d948b"/>
<rect x="409" y="209" width="72" height="18" fill="#ffffff"/>
<rect x="409" y="209" width="71" height="17" fill="#f4f0ea"/>
<rect x="410" y="210" width="70" height="16" fill="#edede4"/>
<text x="411.4" y="222" font-size="11" fill="#111111" stroke="#111111" stroke-width="0.15" letter-spacing="0.86">0000000000</text>
<rect x="407" y="228" width="75" height="20" fill="#ffffff"/>
<rect x="408" y="229" width="74" height="19" fill="#9d948b"/>
<rect x="409" y="230" width="72" height="17" fill="#ffffff"/>
<rect x="409" y="230" width="71" height="16" fill="#f4f0ea"/>
<rect x="410" y="231" width="70" height="15" fill="#edede4"/>
<text x="411.4" y="243" font-size="11" fill="#111111" stroke="#111111" stroke-width="0.15" letter-spacing="0.86">0000000000</text>
<text x="481.6" y="221.7" font-size="11" fill="#111111" stroke="#111111" stroke-width="0.15" letter-spacing="0.2">Pulse</text>
<text x="482.7" y="242.3" font-size="11" fill="#111111" stroke="#111111" stroke-width="0.15" letter-spacing="0.1">deg</text>
<rect x="510" y="207" width="23" height="41" fill="#aabdbd"/>
<rect x="511" y="208" width="21" height="39" fill="#dce5e5"/>
<rect x="407" y="249" width="65" height="21" fill="#c4b3a6"/>
<rect x="408" y="250" width="63" height="19" fill="#fffaf3"/>
<rect x="409" y="251" width="61" height="17" fill="#f9efe6"/>
<rect x="473" y="249" width="60" height="21" fill="#c4b3a6"/>
<rect x="474" y="250" width="58" height="19" fill="#fffaf3"/>
<rect x="475" y="251" width="56" height="17" fill="#f9efe6"/>
<rect x="412" y="253" width="25" height="1" fill="#9c9b34"/>
<rect x="412" y="265" width="25" height="1" fill="#9c9b34"/>
<rect x="410" y="255" width="1" height="9" fill="#9c9b34"/>
<rect x="438" y="255" width="1" height="9" fill="#9c9b34"/>
<rect x="411" y="254" width="1" height="1" fill="#9c9b34"/>
<rect x="437" y="254" width="1" height="1" fill="#9c9b34"/>
<rect x="411" y="264" width="1" height="1" fill="#9c9b34"/>
<rect x="437" y="264" width="1" height="1" fill="#9c9b34"/>
<path d="M412 254H437V255H438V264H437V265H412V264H411V255H412Z" fill="url(#gYel)"/>
<rect x="412" y="254" width="25" height="1" fill="rgba(255,255,255,0.7)"/>
<rect x="411" y="255" width="1" height="9" fill="rgba(255,255,255,0.7)"/>
<text x="424.5" y="264" font-size="11" fill="#101010" stroke="#101010" stroke-width="0.15" text-anchor="middle">Rel</text>
<rect x="442" y="253" width="25" height="1" fill="#5f5f97"/>
<rect x="442" y="265" width="25" height="1" fill="#5f5f97"/>
<rect x="440" y="255" width="1" height="9" fill="#5f5f97"/>
<rect x="468" y="255" width="1" height="9" fill="#5f5f97"/>
<rect x="441" y="254" width="1" height="1" fill="#5f5f97"/>
<rect x="467" y="254" width="1" height="1" fill="#5f5f97"/>
<rect x="441" y="264" width="1" height="1" fill="#5f5f97"/>
<rect x="467" y="264" width="1" height="1" fill="#5f5f97"/>
<path d="M442 254H467V255H468V264H467V265H442V264H441V255H442Z" fill="url(#gBlu)"/>
<rect x="442" y="254" width="25" height="1" fill="rgba(255,255,255,0.7)"/>
<rect x="441" y="255" width="1" height="9" fill="rgba(255,255,255,0.7)"/>
<text x="454.5" y="264" font-size="11" fill="#101010" stroke="#101010" stroke-width="0.15" text-anchor="middle">Abs</text>
<rect x="479" y="253" width="12" height="1" fill="#5f5f97"/>
<rect x="479" y="265" width="12" height="1" fill="#5f5f97"/>
<rect x="477" y="255" width="1" height="9" fill="#5f5f97"/>
<rect x="492" y="255" width="1" height="9" fill="#5f5f97"/>
<rect x="478" y="254" width="1" height="1" fill="#5f5f97"/>
<rect x="491" y="254" width="1" height="1" fill="#5f5f97"/>
<rect x="478" y="264" width="1" height="1" fill="#5f5f97"/>
<rect x="491" y="264" width="1" height="1" fill="#5f5f97"/>
<path d="M479 254H491V255H492V264H491V265H479V264H478V255H479Z" fill="url(#gBlu)"/>
<rect x="479" y="254" width="12" height="1" fill="rgba(255,255,255,0.7)"/>
<rect x="478" y="255" width="1" height="9" fill="rgba(255,255,255,0.7)"/>
<text x="485.0" y="264" font-size="11" fill="#101010" stroke="#101010" stroke-width="0.15" text-anchor="middle">H</text>
<rect x="497" y="253" width="12" height="1" fill="#9c9b34"/>
<rect x="497" y="265" width="12" height="1" fill="#9c9b34"/>
<rect x="495" y="255" width="1" height="9" fill="#9c9b34"/>
<rect x="510" y="255" width="1" height="9" fill="#9c9b34"/>
<rect x="496" y="254" width="1" height="1" fill="#9c9b34"/>
<rect x="509" y="254" width="1" height="1" fill="#9c9b34"/>
<rect x="496" y="264" width="1" height="1" fill="#9c9b34"/>
<rect x="509" y="264" width="1" height="1" fill="#9c9b34"/>
<path d="M497 254H509V255H510V264H509V265H497V264H496V255H497Z" fill="url(#gYel)"/>
<rect x="497" y="254" width="12" height="1" fill="rgba(255,255,255,0.7)"/>
<rect x="496" y="255" width="1" height="9" fill="rgba(255,255,255,0.7)"/>
<text x="503.0" y="264" font-size="11" fill="#101010" stroke="#101010" stroke-width="0.15" text-anchor="middle">M</text>
<rect x="515" y="253" width="12" height="1" fill="#5f5f97"/>
<rect x="515" y="265" width="12" height="1" fill="#5f5f97"/>
<rect x="513" y="255" width="1" height="9" fill="#5f5f97"/>
<rect x="528" y="255" width="1" height="9" fill="#5f5f97"/>
<rect x="514" y="254" width="1" height="1" fill="#5f5f97"/>
<rect x="527" y="254" width="1" height="1" fill="#5f5f97"/>
<rect x="514" y="264" width="1" height="1" fill="#5f5f97"/>
<rect x="527" y="264" width="1" height="1" fill="#5f5f97"/>
<path d="M515 254H527V255H528V264H527V265H515V264H514V255H515Z" fill="url(#gBlu)"/>
<rect x="515" y="254" width="12" height="1" fill="rgba(255,255,255,0.7)"/>
<rect x="514" y="255" width="1" height="9" fill="rgba(255,255,255,0.7)"/>
<text x="521.0" y="264" font-size="11" fill="#101010" stroke="#101010" stroke-width="0.15" text-anchor="middle">L</text>
<path d="M409 273H495V274H496V292H495V293H409V292H408V274H409Z" fill="url(#gCmb)"/>
<rect x="408" y="273" width="68" height="20" fill="#ffffff"/>
<rect x="409" y="272" width="86" height="1" fill="#8b8b8b"/>
<rect x="409" y="293" width="86" height="1" fill="#8b8b8b"/>
<rect x="407" y="274" width="1" height="18" fill="#8b8b8b"/>
<rect x="496" y="274" width="1" height="18" fill="#8b8b8b"/>
<rect x="408" y="273" width="1" height="1" fill="#8b8b8b"/>
<rect x="495" y="273" width="1" height="1" fill="#8b8b8b"/>
<rect x="408" y="292" width="1" height="1" fill="#8b8b8b"/>
<rect x="495" y="292" width="1" height="1" fill="#8b8b8b"/>
<rect x="476" y="273" width="1" height="20" fill="#d0d0d0"/>
<path d="M481.3 282.8L482.7 281.4L485.5 284.2L488.3 281.4L489.7 282.8L485.5 287Z" fill="#000" stroke="#000" stroke-width="0.6" stroke-linejoin="round"/>
<path d="M409 298H495V299H496V317H495V318H409V317H408V299H409Z" fill="url(#gCmb)"/>
<rect x="408" y="298" width="68" height="20" fill="#ffffff"/>
<rect x="409" y="297" width="86" height="1" fill="#8b8b8b"/>
<rect x="409" y="318" width="86" height="1" fill="#8b8b8b"/>
<rect x="407" y="299" width="1" height="18" fill="#8b8b8b"/>
<rect x="496" y="299" width="1" height="18" fill="#8b8b8b"/>
<rect x="408" y="298" width="1" height="1" fill="#8b8b8b"/>
<rect x="495" y="298" width="1" height="1" fill="#8b8b8b"/>
<rect x="408" y="317" width="1" height="1" fill="#8b8b8b"/>
<rect x="495" y="317" width="1" height="1" fill="#8b8b8b"/>
<rect x="476" y="298" width="1" height="20" fill="#d0d0d0"/>
<path d="M481.3 307.8L482.7 306.4L485.5 309.2L488.3 306.4L489.7 307.8L485.5 312Z" fill="#000" stroke="#000" stroke-width="0.6" stroke-linejoin="round"/>
<text x="497.7" y="286.8" font-size="11" fill="#111111" stroke="#111111" stroke-width="0.15" letter-spacing="0.3">Pulse</text>
<text x="498.8" y="311.8" font-size="11" fill="#111111" stroke="#111111" stroke-width="0.15" letter-spacing="0.1">deg</text>
<rect x="686" y="32" width="134" height="145" fill="#939d94"/>
<rect x="686" y="32" width="133" height="144" fill="#ffffff"/>
<rect x="687" y="33" width="132" height="143" fill="#e9f2e9"/>
<rect x="690" y="36" width="86" height="24" fill="rgba(255,255,255,0.55)"/>
<rect x="690" y="36" width="85" height="23" fill="#ffffff"/>
<rect x="691" y="37" width="84" height="22" fill="url(#gBtn)"/>
<rect x="691" y="37" width="82" height="1" fill="#000000"/>
<rect x="691" y="37" width="1" height="20" fill="#000000"/>
<rect x="692" y="38" width="81" height="1" fill="#ffffff"/>
<rect x="692" y="38" width="1" height="19" fill="#f4f4f4"/>
<rect x="773" y="36" width="1" height="23" fill="#a9a9a9"/>
<rect x="690" y="57" width="85" height="1" fill="#a9a9a9"/>
<rect x="774" y="36" width="1" height="23" fill="#6f6f6f"/>
<rect x="690" y="58" width="85" height="1" fill="#6f6f6f"/>
<text x="732.7" y="52" font-size="11" fill="#111111" stroke="#111111" stroke-width="0.15" text-anchor="middle" letter-spacing="0.4">2Theta</text>
<rect x="776" y="36" width="41" height="24" fill="rgba(255,255,255,0.55)"/>
<rect x="776" y="36" width="40" height="23" fill="#ffffff"/>
<rect x="777" y="37" width="39" height="22" fill="url(#gBtn)"/>
<rect x="777" y="37" width="37" height="1" fill="#000000"/>
<rect x="777" y="37" width="1" height="20" fill="#000000"/>
<rect x="778" y="38" width="36" height="1" fill="#ffffff"/>
<rect x="778" y="38" width="1" height="19" fill="#f4f4f4"/>
<rect x="814" y="36" width="1" height="23" fill="#a9a9a9"/>
<rect x="776" y="57" width="40" height="1" fill="#a9a9a9"/>
<rect x="815" y="36" width="1" height="23" fill="#6f6f6f"/>
<rect x="776" y="58" width="40" height="1" fill="#6f6f6f"/>
<text x="796.2" y="52" font-size="11" fill="#111111" stroke="#111111" stroke-width="0.15" text-anchor="middle" letter-spacing="0">Go</text>
<rect x="690" y="60" width="75" height="21" fill="#ffffff"/>
<rect x="691" y="61" width="74" height="20" fill="#8f9c94"/>
<rect x="692" y="62" width="72" height="18" fill="#ffffff"/>
<rect x="692" y="62" width="71" height="17" fill="#f4f0ea"/>
<rect x="693" y="63" width="70" height="16" fill="#edede4"/>
<text x="694.4" y="75" font-size="11" fill="#111111" stroke="#111111" stroke-width="0.15" letter-spacing="0.86">0000000000</text>
<rect x="690" y="81" width="75" height="20" fill="#ffffff"/>
<rect x="691" y="82" width="74" height="19" fill="#8f9c94"/>
<rect x="692" y="83" width="72" height="17" fill="#ffffff"/>
<rect x="692" y="83" width="71" height="16" fill="#f4f0ea"/>
<rect x="693" y="84" width="70" height="15" fill="#edede4"/>
<text x="694.4" y="96" font-size="11" fill="#111111" stroke="#111111" stroke-width="0.15" letter-spacing="0.86">0000000000</text>
<text x="764.6" y="74.7" font-size="11" fill="#111111" stroke="#111111" stroke-width="0.15" letter-spacing="0.2">Pulse</text>
<text x="765.7" y="95.3" font-size="11" fill="#111111" stroke="#111111" stroke-width="0.15" letter-spacing="0.1">deg</text>
<rect x="793" y="60" width="23" height="41" fill="#aabdbd"/>
<rect x="794" y="61" width="21" height="39" fill="#dce5e5"/>
<rect x="690" y="102" width="65" height="21" fill="#b4c0b4"/>
<rect x="691" y="103" width="63" height="19" fill="#f6fff6"/>
<rect x="692" y="104" width="61" height="17" fill="#e9f2e9"/>
<rect x="756" y="102" width="60" height="21" fill="#b4c0b4"/>
<rect x="757" y="103" width="58" height="19" fill="#f6fff6"/>
<rect x="758" y="104" width="56" height="17" fill="#e9f2e9"/>
<rect x="695" y="106" width="25" height="1" fill="#9c9b34"/>
<rect x="695" y="118" width="25" height="1" fill="#9c9b34"/>
<rect x="693" y="108" width="1" height="9" fill="#9c9b34"/>
<rect x="721" y="108" width="1" height="9" fill="#9c9b34"/>
<rect x="694" y="107" width="1" height="1" fill="#9c9b34"/>
<rect x="720" y="107" width="1" height="1" fill="#9c9b34"/>
<rect x="694" y="117" width="1" height="1" fill="#9c9b34"/>
<rect x="720" y="117" width="1" height="1" fill="#9c9b34"/>
<path d="M695 107H720V108H721V117H720V118H695V117H694V108H695Z" fill="url(#gYel)"/>
<rect x="695" y="107" width="25" height="1" fill="rgba(255,255,255,0.7)"/>
<rect x="694" y="108" width="1" height="9" fill="rgba(255,255,255,0.7)"/>
<text x="707.5" y="117" font-size="11" fill="#101010" stroke="#101010" stroke-width="0.15" text-anchor="middle">Rel</text>
<rect x="725" y="106" width="25" height="1" fill="#5f5f97"/>
<rect x="725" y="118" width="25" height="1" fill="#5f5f97"/>
<rect x="723" y="108" width="1" height="9" fill="#5f5f97"/>
<rect x="751" y="108" width="1" height="9" fill="#5f5f97"/>
<rect x="724" y="107" width="1" height="1" fill="#5f5f97"/>
<rect x="750" y="107" width="1" height="1" fill="#5f5f97"/>
<rect x="724" y="117" width="1" height="1" fill="#5f5f97"/>
<rect x="750" y="117" width="1" height="1" fill="#5f5f97"/>
<path d="M725 107H750V108H751V117H750V118H725V117H724V108H725Z" fill="url(#gBlu)"/>
<rect x="725" y="107" width="25" height="1" fill="rgba(255,255,255,0.7)"/>
<rect x="724" y="108" width="1" height="9" fill="rgba(255,255,255,0.7)"/>
<text x="737.5" y="117" font-size="11" fill="#101010" stroke="#101010" stroke-width="0.15" text-anchor="middle">Abs</text>
<rect x="762" y="106" width="12" height="1" fill="#5f5f97"/>
<rect x="762" y="118" width="12" height="1" fill="#5f5f97"/>
<rect x="760" y="108" width="1" height="9" fill="#5f5f97"/>
<rect x="775" y="108" width="1" height="9" fill="#5f5f97"/>
<rect x="761" y="107" width="1" height="1" fill="#5f5f97"/>
<rect x="774" y="107" width="1" height="1" fill="#5f5f97"/>
<rect x="761" y="117" width="1" height="1" fill="#5f5f97"/>
<rect x="774" y="117" width="1" height="1" fill="#5f5f97"/>
<path d="M762 107H774V108H775V117H774V118H762V117H761V108H762Z" fill="url(#gBlu)"/>
<rect x="762" y="107" width="12" height="1" fill="rgba(255,255,255,0.7)"/>
<rect x="761" y="108" width="1" height="9" fill="rgba(255,255,255,0.7)"/>
<text x="768.0" y="117" font-size="11" fill="#101010" stroke="#101010" stroke-width="0.15" text-anchor="middle">H</text>
<rect x="780" y="106" width="12" height="1" fill="#9c9b34"/>
<rect x="780" y="118" width="12" height="1" fill="#9c9b34"/>
<rect x="778" y="108" width="1" height="9" fill="#9c9b34"/>
<rect x="793" y="108" width="1" height="9" fill="#9c9b34"/>
<rect x="779" y="107" width="1" height="1" fill="#9c9b34"/>
<rect x="792" y="107" width="1" height="1" fill="#9c9b34"/>
<rect x="779" y="117" width="1" height="1" fill="#9c9b34"/>
<rect x="792" y="117" width="1" height="1" fill="#9c9b34"/>
<path d="M780 107H792V108H793V117H792V118H780V117H779V108H780Z" fill="url(#gYel)"/>
<rect x="780" y="107" width="12" height="1" fill="rgba(255,255,255,0.7)"/>
<rect x="779" y="108" width="1" height="9" fill="rgba(255,255,255,0.7)"/>
<text x="786.0" y="117" font-size="11" fill="#101010" stroke="#101010" stroke-width="0.15" text-anchor="middle">M</text>
<rect x="798" y="106" width="12" height="1" fill="#5f5f97"/>
<rect x="798" y="118" width="12" height="1" fill="#5f5f97"/>
<rect x="796" y="108" width="1" height="9" fill="#5f5f97"/>
<rect x="811" y="108" width="1" height="9" fill="#5f5f97"/>
<rect x="797" y="107" width="1" height="1" fill="#5f5f97"/>
<rect x="810" y="107" width="1" height="1" fill="#5f5f97"/>
<rect x="797" y="117" width="1" height="1" fill="#5f5f97"/>
<rect x="810" y="117" width="1" height="1" fill="#5f5f97"/>
<path d="M798 107H810V108H811V117H810V118H798V117H797V108H798Z" fill="url(#gBlu)"/>
<rect x="798" y="107" width="12" height="1" fill="rgba(255,255,255,0.7)"/>
<rect x="797" y="108" width="1" height="9" fill="rgba(255,255,255,0.7)"/>
<text x="804.0" y="117" font-size="11" fill="#101010" stroke="#101010" stroke-width="0.15" text-anchor="middle">L</text>
<path d="M692 126H778V127H779V145H778V146H692V145H691V127H692Z" fill="url(#gCmb)"/>
<rect x="691" y="126" width="68" height="20" fill="#ffffff"/>
<rect x="692" y="125" width="86" height="1" fill="#8b8b8b"/>
<rect x="692" y="146" width="86" height="1" fill="#8b8b8b"/>
<rect x="690" y="127" width="1" height="18" fill="#8b8b8b"/>
<rect x="779" y="127" width="1" height="18" fill="#8b8b8b"/>
<rect x="691" y="126" width="1" height="1" fill="#8b8b8b"/>
<rect x="778" y="126" width="1" height="1" fill="#8b8b8b"/>
<rect x="691" y="145" width="1" height="1" fill="#8b8b8b"/>
<rect x="778" y="145" width="1" height="1" fill="#8b8b8b"/>
<rect x="759" y="126" width="1" height="20" fill="#d0d0d0"/>
<path d="M764.3 135.8L765.7 134.4L768.5 137.2L771.3 134.4L772.7 135.8L768.5 140Z" fill="#000" stroke="#000" stroke-width="0.6" stroke-linejoin="round"/>
<path d="M692 151H778V152H779V170H778V171H692V170H691V152H692Z" fill="url(#gCmb)"/>
<rect x="691" y="151" width="68" height="20" fill="#ffffff"/>
<rect x="692" y="150" width="86" height="1" fill="#8b8b8b"/>
<rect x="692" y="171" width="86" height="1" fill="#8b8b8b"/>
<rect x="690" y="152" width="1" height="18" fill="#8b8b8b"/>
<rect x="779" y="152" width="1" height="18" fill="#8b8b8b"/>
<rect x="691" y="151" width="1" height="1" fill="#8b8b8b"/>
<rect x="778" y="151" width="1" height="1" fill="#8b8b8b"/>
<rect x="691" y="170" width="1" height="1" fill="#8b8b8b"/>
<rect x="778" y="170" width="1" height="1" fill="#8b8b8b"/>
<rect x="759" y="151" width="1" height="20" fill="#d0d0d0"/>
<path d="M764.3 160.8L765.7 159.4L768.5 162.2L771.3 159.4L772.7 160.8L768.5 165Z" fill="#000" stroke="#000" stroke-width="0.6" stroke-linejoin="round"/>
<text x="780.7" y="139.8" font-size="11" fill="#111111" stroke="#111111" stroke-width="0.15" letter-spacing="0.3">Pulse</text>
<text x="781.8" y="164.8" font-size="11" fill="#111111" stroke="#111111" stroke-width="0.15" letter-spacing="0.1">deg</text>
<rect x="821" y="32" width="134" height="145" fill="#939d94"/>
<rect x="821" y="32" width="133" height="144" fill="#ffffff"/>
<rect x="822" y="33" width="132" height="143" fill="#e9f2e9"/>
<rect x="825" y="36" width="86" height="24" fill="rgba(255,255,255,0.55)"/>
<rect x="825" y="36" width="85" height="23" fill="#ffffff"/>
<rect x="826" y="37" width="84" height="22" fill="url(#gBtn)"/>
<rect x="826" y="37" width="82" height="1" fill="#000000"/>
<rect x="826" y="37" width="1" height="20" fill="#000000"/>
<rect x="827" y="38" width="81" height="1" fill="#ffffff"/>
<rect x="827" y="38" width="1" height="19" fill="#f4f4f4"/>
<rect x="908" y="36" width="1" height="23" fill="#a9a9a9"/>
<rect x="825" y="57" width="85" height="1" fill="#a9a9a9"/>
<rect x="909" y="36" width="1" height="23" fill="#6f6f6f"/>
<rect x="825" y="58" width="85" height="1" fill="#6f6f6f"/>
<text x="867.7" y="52" font-size="11" fill="#111111" stroke="#111111" stroke-width="0.15" text-anchor="middle" letter-spacing="0.4">ThetaZ</text>
<rect x="911" y="36" width="41" height="24" fill="rgba(255,255,255,0.55)"/>
<rect x="911" y="36" width="40" height="23" fill="#ffffff"/>
<rect x="912" y="37" width="39" height="22" fill="url(#gBtn)"/>
<rect x="912" y="37" width="37" height="1" fill="#000000"/>
<rect x="912" y="37" width="1" height="20" fill="#000000"/>
<rect x="913" y="38" width="36" height="1" fill="#ffffff"/>
<rect x="913" y="38" width="1" height="19" fill="#f4f4f4"/>
<rect x="949" y="36" width="1" height="23" fill="#a9a9a9"/>
<rect x="911" y="57" width="40" height="1" fill="#a9a9a9"/>
<rect x="950" y="36" width="1" height="23" fill="#6f6f6f"/>
<rect x="911" y="58" width="40" height="1" fill="#6f6f6f"/>
<text x="931.2" y="52" font-size="11" fill="#111111" stroke="#111111" stroke-width="0.15" text-anchor="middle" letter-spacing="0">Go</text>
<rect x="825" y="60" width="75" height="21" fill="#ffffff"/>
<rect x="826" y="61" width="74" height="20" fill="#8f9c94"/>
<rect x="827" y="62" width="72" height="18" fill="#ffffff"/>
<rect x="827" y="62" width="71" height="17" fill="#f4f0ea"/>
<rect x="828" y="63" width="70" height="16" fill="#edede4"/>
<text x="829.4" y="75" font-size="11" fill="#111111" stroke="#111111" stroke-width="0.15" letter-spacing="0.86">0000000000</text>
<rect x="825" y="81" width="75" height="20" fill="#ffffff"/>
<rect x="826" y="82" width="74" height="19" fill="#8f9c94"/>
<rect x="827" y="83" width="72" height="17" fill="#ffffff"/>
<rect x="827" y="83" width="71" height="16" fill="#f4f0ea"/>
<rect x="828" y="84" width="70" height="15" fill="#edede4"/>
<text x="829.4" y="96" font-size="11" fill="#111111" stroke="#111111" stroke-width="0.15" letter-spacing="0.86">0000000000</text>
<text x="899.6" y="74.7" font-size="11" fill="#111111" stroke="#111111" stroke-width="0.15" letter-spacing="0.2">Pulse</text>
<text x="900.7" y="95.3" font-size="11" fill="#111111" stroke="#111111" stroke-width="0.15" letter-spacing="0.1">deg</text>
<rect x="928" y="60" width="23" height="41" fill="#aabdbd"/>
<rect x="929" y="61" width="21" height="39" fill="#dce5e5"/>
<rect x="825" y="102" width="65" height="21" fill="#b4c0b4"/>
<rect x="826" y="103" width="63" height="19" fill="#f6fff6"/>
<rect x="827" y="104" width="61" height="17" fill="#e9f2e9"/>
<rect x="891" y="102" width="60" height="21" fill="#b4c0b4"/>
<rect x="892" y="103" width="58" height="19" fill="#f6fff6"/>
<rect x="893" y="104" width="56" height="17" fill="#e9f2e9"/>
<rect x="830" y="106" width="25" height="1" fill="#9c9b34"/>
<rect x="830" y="118" width="25" height="1" fill="#9c9b34"/>
<rect x="828" y="108" width="1" height="9" fill="#9c9b34"/>
<rect x="856" y="108" width="1" height="9" fill="#9c9b34"/>
<rect x="829" y="107" width="1" height="1" fill="#9c9b34"/>
<rect x="855" y="107" width="1" height="1" fill="#9c9b34"/>
<rect x="829" y="117" width="1" height="1" fill="#9c9b34"/>
<rect x="855" y="117" width="1" height="1" fill="#9c9b34"/>
<path d="M830 107H855V108H856V117H855V118H830V117H829V108H830Z" fill="url(#gYel)"/>
<rect x="830" y="107" width="25" height="1" fill="rgba(255,255,255,0.7)"/>
<rect x="829" y="108" width="1" height="9" fill="rgba(255,255,255,0.7)"/>
<text x="842.5" y="117" font-size="11" fill="#101010" stroke="#101010" stroke-width="0.15" text-anchor="middle">Rel</text>
<rect x="860" y="106" width="25" height="1" fill="#5f5f97"/>
<rect x="860" y="118" width="25" height="1" fill="#5f5f97"/>
<rect x="858" y="108" width="1" height="9" fill="#5f5f97"/>
<rect x="886" y="108" width="1" height="9" fill="#5f5f97"/>
<rect x="859" y="107" width="1" height="1" fill="#5f5f97"/>
<rect x="885" y="107" width="1" height="1" fill="#5f5f97"/>
<rect x="859" y="117" width="1" height="1" fill="#5f5f97"/>
<rect x="885" y="117" width="1" height="1" fill="#5f5f97"/>
<path d="M860 107H885V108H886V117H885V118H860V117H859V108H860Z" fill="url(#gBlu)"/>
<rect x="860" y="107" width="25" height="1" fill="rgba(255,255,255,0.7)"/>
<rect x="859" y="108" width="1" height="9" fill="rgba(255,255,255,0.7)"/>
<text x="872.5" y="117" font-size="11" fill="#101010" stroke="#101010" stroke-width="0.15" text-anchor="middle">Abs</text>
<rect x="897" y="106" width="12" height="1" fill="#5f5f97"/>
<rect x="897" y="118" width="12" height="1" fill="#5f5f97"/>
<rect x="895" y="108" width="1" height="9" fill="#5f5f97"/>
<rect x="910" y="108" width="1" height="9" fill="#5f5f97"/>
<rect x="896" y="107" width="1" height="1" fill="#5f5f97"/>
<rect x="909" y="107" width="1" height="1" fill="#5f5f97"/>
<rect x="896" y="117" width="1" height="1" fill="#5f5f97"/>
<rect x="909" y="117" width="1" height="1" fill="#5f5f97"/>
<path d="M897 107H909V108H910V117H909V118H897V117H896V108H897Z" fill="url(#gBlu)"/>
<rect x="897" y="107" width="12" height="1" fill="rgba(255,255,255,0.7)"/>
<rect x="896" y="108" width="1" height="9" fill="rgba(255,255,255,0.7)"/>
<text x="903.0" y="117" font-size="11" fill="#101010" stroke="#101010" stroke-width="0.15" text-anchor="middle">H</text>
<rect x="915" y="106" width="12" height="1" fill="#9c9b34"/>
<rect x="915" y="118" width="12" height="1" fill="#9c9b34"/>
<rect x="913" y="108" width="1" height="9" fill="#9c9b34"/>
<rect x="928" y="108" width="1" height="9" fill="#9c9b34"/>
<rect x="914" y="107" width="1" height="1" fill="#9c9b34"/>
<rect x="927" y="107" width="1" height="1" fill="#9c9b34"/>
<rect x="914" y="117" width="1" height="1" fill="#9c9b34"/>
<rect x="927" y="117" width="1" height="1" fill="#9c9b34"/>
<path d="M915 107H927V108H928V117H927V118H915V117H914V108H915Z" fill="url(#gYel)"/>
<rect x="915" y="107" width="12" height="1" fill="rgba(255,255,255,0.7)"/>
<rect x="914" y="108" width="1" height="9" fill="rgba(255,255,255,0.7)"/>
<text x="921.0" y="117" font-size="11" fill="#101010" stroke="#101010" stroke-width="0.15" text-anchor="middle">M</text>
<rect x="933" y="106" width="12" height="1" fill="#5f5f97"/>
<rect x="933" y="118" width="12" height="1" fill="#5f5f97"/>
<rect x="931" y="108" width="1" height="9" fill="#5f5f97"/>
<rect x="946" y="108" width="1" height="9" fill="#5f5f97"/>
<rect x="932" y="107" width="1" height="1" fill="#5f5f97"/>
<rect x="945" y="107" width="1" height="1" fill="#5f5f97"/>
<rect x="932" y="117" width="1" height="1" fill="#5f5f97"/>
<rect x="945" y="117" width="1" height="1" fill="#5f5f97"/>
<path d="M933 107H945V108H946V117H945V118H933V117H932V108H933Z" fill="url(#gBlu)"/>
<rect x="933" y="107" width="12" height="1" fill="rgba(255,255,255,0.7)"/>
<rect x="932" y="108" width="1" height="9" fill="rgba(255,255,255,0.7)"/>
<text x="939.0" y="117" font-size="11" fill="#101010" stroke="#101010" stroke-width="0.15" text-anchor="middle">L</text>
<path d="M827 126H913V127H914V145H913V146H827V145H826V127H827Z" fill="url(#gCmb)"/>
<rect x="826" y="126" width="68" height="20" fill="#ffffff"/>
<rect x="827" y="125" width="86" height="1" fill="#8b8b8b"/>
<rect x="827" y="146" width="86" height="1" fill="#8b8b8b"/>
<rect x="825" y="127" width="1" height="18" fill="#8b8b8b"/>
<rect x="914" y="127" width="1" height="18" fill="#8b8b8b"/>
<rect x="826" y="126" width="1" height="1" fill="#8b8b8b"/>
<rect x="913" y="126" width="1" height="1" fill="#8b8b8b"/>
<rect x="826" y="145" width="1" height="1" fill="#8b8b8b"/>
<rect x="913" y="145" width="1" height="1" fill="#8b8b8b"/>
<rect x="894" y="126" width="1" height="20" fill="#d0d0d0"/>
<path d="M899.3 135.8L900.7 134.4L903.5 137.2L906.3 134.4L907.7 135.8L903.5 140Z" fill="#000" stroke="#000" stroke-width="0.6" stroke-linejoin="round"/>
<path d="M827 151H913V152H914V170H913V171H827V170H826V152H827Z" fill="url(#gCmb)"/>
<rect x="826" y="151" width="68" height="20" fill="#ffffff"/>
<rect x="827" y="150" width="86" height="1" fill="#8b8b8b"/>
<rect x="827" y="171" width="86" height="1" fill="#8b8b8b"/>
<rect x="825" y="152" width="1" height="18" fill="#8b8b8b"/>
<rect x="914" y="152" width="1" height="18" fill="#8b8b8b"/>
<rect x="826" y="151" width="1" height="1" fill="#8b8b8b"/>
<rect x="913" y="151" width="1" height="1" fill="#8b8b8b"/>
<rect x="826" y="170" width="1" height="1" fill="#8b8b8b"/>
<rect x="913" y="170" width="1" height="1" fill="#8b8b8b"/>
<rect x="894" y="151" width="1" height="20" fill="#d0d0d0"/>
<path d="M899.3 160.8L900.7 159.4L903.5 162.2L906.3 159.4L907.7 160.8L903.5 165Z" fill="#000" stroke="#000" stroke-width="0.6" stroke-linejoin="round"/>
<text x="915.7" y="139.8" font-size="11" fill="#111111" stroke="#111111" stroke-width="0.15" letter-spacing="0.3">Pulse</text>
<text x="916.8" y="164.8" font-size="11" fill="#111111" stroke="#111111" stroke-width="0.15" letter-spacing="0.1">deg</text>
<rect x="551" y="180" width="134" height="145" fill="#939d94"/>
<rect x="551" y="180" width="133" height="144" fill="#ffffff"/>
<rect x="552" y="181" width="132" height="143" fill="#e9f2e9"/>
<rect x="555" y="184" width="86" height="24" fill="rgba(255,255,255,0.55)"/>
<rect x="555" y="184" width="85" height="23" fill="#ffffff"/>
<rect x="556" y="185" width="84" height="22" fill="url(#gBtn)"/>
<rect x="556" y="185" width="82" height="1" fill="#000000"/>
<rect x="556" y="185" width="1" height="20" fill="#000000"/>
<rect x="557" y="186" width="81" height="1" fill="#ffffff"/>
<rect x="557" y="186" width="1" height="19" fill="#f4f4f4"/>
<rect x="638" y="184" width="1" height="23" fill="#a9a9a9"/>
<rect x="555" y="205" width="85" height="1" fill="#a9a9a9"/>
<rect x="639" y="184" width="1" height="23" fill="#6f6f6f"/>
<rect x="555" y="206" width="85" height="1" fill="#6f6f6f"/>
<text x="597.7" y="200" font-size="11" fill="#111111" stroke="#111111" stroke-width="0.15" text-anchor="middle" letter-spacing="0.4">Z-F</text>
<rect x="641" y="184" width="41" height="24" fill="rgba(255,255,255,0.55)"/>
<rect x="641" y="184" width="40" height="23" fill="#ffffff"/>
<rect x="642" y="185" width="39" height="22" fill="url(#gBtn)"/>
<rect x="642" y="185" width="37" height="1" fill="#000000"/>
<rect x="642" y="185" width="1" height="20" fill="#000000"/>
<rect x="643" y="186" width="36" height="1" fill="#ffffff"/>
<rect x="643" y="186" width="1" height="19" fill="#f4f4f4"/>
<rect x="679" y="184" width="1" height="23" fill="#a9a9a9"/>
<rect x="641" y="205" width="40" height="1" fill="#a9a9a9"/>
<rect x="680" y="184" width="1" height="23" fill="#6f6f6f"/>
<rect x="641" y="206" width="40" height="1" fill="#6f6f6f"/>
<text x="661.2" y="200" font-size="11" fill="#111111" stroke="#111111" stroke-width="0.15" text-anchor="middle" letter-spacing="0">Go</text>
<rect x="555" y="208" width="75" height="21" fill="#ffffff"/>
<rect x="556" y="209" width="74" height="20" fill="#8f9c94"/>
<rect x="557" y="210" width="72" height="18" fill="#ffffff"/>
<rect x="557" y="210" width="71" height="17" fill="#f4f0ea"/>
<rect x="558" y="211" width="70" height="16" fill="#edede4"/>
<text x="559.4" y="223" font-size="11" fill="#111111" stroke="#111111" stroke-width="0.15" letter-spacing="0.86">0000000000</text>
<rect x="555" y="229" width="75" height="20" fill="#ffffff"/>
<rect x="556" y="230" width="74" height="19" fill="#8f9c94"/>
<rect x="557" y="231" width="72" height="17" fill="#ffffff"/>
<rect x="557" y="231" width="71" height="16" fill="#f4f0ea"/>
<rect x="558" y="232" width="70" height="15" fill="#edede4"/>
<text x="559.4" y="244" font-size="11" fill="#111111" stroke="#111111" stroke-width="0.15" letter-spacing="0.86">0000000000</text>
<text x="629.6" y="222.7" font-size="11" fill="#111111" stroke="#111111" stroke-width="0.15" letter-spacing="0.2">Pulse</text>
<text x="629.9" y="243.3" font-size="11" fill="#111111" stroke="#111111" stroke-width="0.15" letter-spacing="0.6">mm</text>
<rect x="658" y="208" width="23" height="41" fill="#aabdbd"/>
<rect x="659" y="209" width="21" height="39" fill="#dce5e5"/>
<rect x="555" y="250" width="65" height="21" fill="#b4c0b4"/>
<rect x="556" y="251" width="63" height="19" fill="#f6fff6"/>
<rect x="557" y="252" width="61" height="17" fill="#e9f2e9"/>
<rect x="621" y="250" width="60" height="21" fill="#b4c0b4"/>
<rect x="622" y="251" width="58" height="19" fill="#f6fff6"/>
<rect x="623" y="252" width="56" height="17" fill="#e9f2e9"/>
<rect x="560" y="254" width="25" height="1" fill="#9c9b34"/>
<rect x="560" y="266" width="25" height="1" fill="#9c9b34"/>
<rect x="558" y="256" width="1" height="9" fill="#9c9b34"/>
<rect x="586" y="256" width="1" height="9" fill="#9c9b34"/>
<rect x="559" y="255" width="1" height="1" fill="#9c9b34"/>
<rect x="585" y="255" width="1" height="1" fill="#9c9b34"/>
<rect x="559" y="265" width="1" height="1" fill="#9c9b34"/>
<rect x="585" y="265" width="1" height="1" fill="#9c9b34"/>
<path d="M560 255H585V256H586V265H585V266H560V265H559V256H560Z" fill="url(#gYel)"/>
<rect x="560" y="255" width="25" height="1" fill="rgba(255,255,255,0.7)"/>
<rect x="559" y="256" width="1" height="9" fill="rgba(255,255,255,0.7)"/>
<text x="572.5" y="265" font-size="11" fill="#101010" stroke="#101010" stroke-width="0.15" text-anchor="middle">Rel</text>
<rect x="590" y="254" width="25" height="1" fill="#5f5f97"/>
<rect x="590" y="266" width="25" height="1" fill="#5f5f97"/>
<rect x="588" y="256" width="1" height="9" fill="#5f5f97"/>
<rect x="616" y="256" width="1" height="9" fill="#5f5f97"/>
<rect x="589" y="255" width="1" height="1" fill="#5f5f97"/>
<rect x="615" y="255" width="1" height="1" fill="#5f5f97"/>
<rect x="589" y="265" width="1" height="1" fill="#5f5f97"/>
<rect x="615" y="265" width="1" height="1" fill="#5f5f97"/>
<path d="M590 255H615V256H616V265H615V266H590V265H589V256H590Z" fill="url(#gBlu)"/>
<rect x="590" y="255" width="25" height="1" fill="rgba(255,255,255,0.7)"/>
<rect x="589" y="256" width="1" height="9" fill="rgba(255,255,255,0.7)"/>
<text x="602.5" y="265" font-size="11" fill="#101010" stroke="#101010" stroke-width="0.15" text-anchor="middle">Abs</text>
<rect x="627" y="254" width="12" height="1" fill="#5f5f97"/>
<rect x="627" y="266" width="12" height="1" fill="#5f5f97"/>
<rect x="625" y="256" width="1" height="9" fill="#5f5f97"/>
<rect x="640" y="256" width="1" height="9" fill="#5f5f97"/>
<rect x="626" y="255" width="1" height="1" fill="#5f5f97"/>
<rect x="639" y="255" width="1" height="1" fill="#5f5f97"/>
<rect x="626" y="265" width="1" height="1" fill="#5f5f97"/>
<rect x="639" y="265" width="1" height="1" fill="#5f5f97"/>
<path d="M627 255H639V256H640V265H639V266H627V265H626V256H627Z" fill="url(#gBlu)"/>
<rect x="627" y="255" width="12" height="1" fill="rgba(255,255,255,0.7)"/>
<rect x="626" y="256" width="1" height="9" fill="rgba(255,255,255,0.7)"/>
<text x="633.0" y="265" font-size="11" fill="#101010" stroke="#101010" stroke-width="0.15" text-anchor="middle">H</text>
<rect x="645" y="254" width="12" height="1" fill="#9c9b34"/>
<rect x="645" y="266" width="12" height="1" fill="#9c9b34"/>
<rect x="643" y="256" width="1" height="9" fill="#9c9b34"/>
<rect x="658" y="256" width="1" height="9" fill="#9c9b34"/>
<rect x="644" y="255" width="1" height="1" fill="#9c9b34"/>
<rect x="657" y="255" width="1" height="1" fill="#9c9b34"/>
<rect x="644" y="265" width="1" height="1" fill="#9c9b34"/>
<rect x="657" y="265" width="1" height="1" fill="#9c9b34"/>
<path d="M645 255H657V256H658V265H657V266H645V265H644V256H645Z" fill="url(#gYel)"/>
<rect x="645" y="255" width="12" height="1" fill="rgba(255,255,255,0.7)"/>
<rect x="644" y="256" width="1" height="9" fill="rgba(255,255,255,0.7)"/>
<text x="651.0" y="265" font-size="11" fill="#101010" stroke="#101010" stroke-width="0.15" text-anchor="middle">M</text>
<rect x="663" y="254" width="12" height="1" fill="#5f5f97"/>
<rect x="663" y="266" width="12" height="1" fill="#5f5f97"/>
<rect x="661" y="256" width="1" height="9" fill="#5f5f97"/>
<rect x="676" y="256" width="1" height="9" fill="#5f5f97"/>
<rect x="662" y="255" width="1" height="1" fill="#5f5f97"/>
<rect x="675" y="255" width="1" height="1" fill="#5f5f97"/>
<rect x="662" y="265" width="1" height="1" fill="#5f5f97"/>
<rect x="675" y="265" width="1" height="1" fill="#5f5f97"/>
<path d="M663 255H675V256H676V265H675V266H663V265H662V256H663Z" fill="url(#gBlu)"/>
<rect x="663" y="255" width="12" height="1" fill="rgba(255,255,255,0.7)"/>
<rect x="662" y="256" width="1" height="9" fill="rgba(255,255,255,0.7)"/>
<text x="669.0" y="265" font-size="11" fill="#101010" stroke="#101010" stroke-width="0.15" text-anchor="middle">L</text>
<path d="M557 274H643V275H644V293H643V294H557V293H556V275H557Z" fill="url(#gCmb)"/>
<rect x="556" y="274" width="68" height="20" fill="#ffffff"/>
<rect x="557" y="273" width="86" height="1" fill="#8b8b8b"/>
<rect x="557" y="294" width="86" height="1" fill="#8b8b8b"/>
<rect x="555" y="275" width="1" height="18" fill="#8b8b8b"/>
<rect x="644" y="275" width="1" height="18" fill="#8b8b8b"/>
<rect x="556" y="274" width="1" height="1" fill="#8b8b8b"/>
<rect x="643" y="274" width="1" height="1" fill="#8b8b8b"/>
<rect x="556" y="293" width="1" height="1" fill="#8b8b8b"/>
<rect x="643" y="293" width="1" height="1" fill="#8b8b8b"/>
<rect x="624" y="274" width="1" height="20" fill="#d0d0d0"/>
<path d="M629.3 283.8L630.7 282.4L633.5 285.2L636.3 282.4L637.7 283.8L633.5 288Z" fill="#000" stroke="#000" stroke-width="0.6" stroke-linejoin="round"/>
<path d="M557 299H643V300H644V318H643V319H557V318H556V300H557Z" fill="url(#gCmb)"/>
<rect x="556" y="299" width="68" height="20" fill="#ffffff"/>
<rect x="557" y="298" width="86" height="1" fill="#8b8b8b"/>
<rect x="557" y="319" width="86" height="1" fill="#8b8b8b"/>
<rect x="555" y="300" width="1" height="18" fill="#8b8b8b"/>
<rect x="644" y="300" width="1" height="18" fill="#8b8b8b"/>
<rect x="556" y="299" width="1" height="1" fill="#8b8b8b"/>
<rect x="643" y="299" width="1" height="1" fill="#8b8b8b"/>
<rect x="556" y="318" width="1" height="1" fill="#8b8b8b"/>
<rect x="643" y="318" width="1" height="1" fill="#8b8b8b"/>
<rect x="624" y="299" width="1" height="20" fill="#d0d0d0"/>
<path d="M629.3 308.8L630.7 307.4L633.5 310.2L636.3 307.4L637.7 308.8L633.5 313Z" fill="#000" stroke="#000" stroke-width="0.6" stroke-linejoin="round"/>
<text x="645.7" y="287.8" font-size="11" fill="#111111" stroke="#111111" stroke-width="0.15" letter-spacing="0.3">Pulse</text>
<text x="646.0" y="312.8" font-size="11" fill="#111111" stroke="#111111" stroke-width="0.15" letter-spacing="0.6">mm</text>
<rect x="686" y="180" width="134" height="145" fill="#939d94"/>
<rect x="686" y="180" width="133" height="144" fill="#ffffff"/>
<rect x="687" y="181" width="132" height="143" fill="#e9f2e9"/>
<rect x="690" y="184" width="86" height="24" fill="rgba(255,255,255,0.55)"/>
<rect x="690" y="184" width="85" height="23" fill="#ffffff"/>
<rect x="691" y="185" width="84" height="22" fill="url(#gBtn)"/>
<rect x="691" y="185" width="82" height="1" fill="#000000"/>
<rect x="691" y="185" width="1" height="20" fill="#000000"/>
<rect x="692" y="186" width="81" height="1" fill="#ffffff"/>
<rect x="692" y="186" width="1" height="19" fill="#f4f4f4"/>
<rect x="773" y="184" width="1" height="23" fill="#a9a9a9"/>
<rect x="690" y="205" width="85" height="1" fill="#a9a9a9"/>
<rect x="774" y="184" width="1" height="23" fill="#6f6f6f"/>
<rect x="690" y="206" width="85" height="1" fill="#6f6f6f"/>
<text x="732.7" y="200" font-size="11" fill="#111111" stroke="#111111" stroke-width="0.15" text-anchor="middle" letter-spacing="0.4">Z-R</text>
<rect x="776" y="184" width="41" height="24" fill="rgba(255,255,255,0.55)"/>
<rect x="776" y="184" width="40" height="23" fill="#ffffff"/>
<rect x="777" y="185" width="39" height="22" fill="url(#gBtn)"/>
<rect x="777" y="185" width="37" height="1" fill="#000000"/>
<rect x="777" y="185" width="1" height="20" fill="#000000"/>
<rect x="778" y="186" width="36" height="1" fill="#ffffff"/>
<rect x="778" y="186" width="1" height="19" fill="#f4f4f4"/>
<rect x="814" y="184" width="1" height="23" fill="#a9a9a9"/>
<rect x="776" y="205" width="40" height="1" fill="#a9a9a9"/>
<rect x="815" y="184" width="1" height="23" fill="#6f6f6f"/>
<rect x="776" y="206" width="40" height="1" fill="#6f6f6f"/>
<text x="796.2" y="200" font-size="11" fill="#111111" stroke="#111111" stroke-width="0.15" text-anchor="middle" letter-spacing="0">Go</text>
<rect x="690" y="208" width="75" height="21" fill="#ffffff"/>
<rect x="691" y="209" width="74" height="20" fill="#8f9c94"/>
<rect x="692" y="210" width="72" height="18" fill="#ffffff"/>
<rect x="692" y="210" width="71" height="17" fill="#f4f0ea"/>
<rect x="693" y="211" width="70" height="16" fill="#edede4"/>
<text x="694.4" y="223" font-size="11" fill="#111111" stroke="#111111" stroke-width="0.15" letter-spacing="0.86">0000000000</text>
<rect x="690" y="229" width="75" height="20" fill="#ffffff"/>
<rect x="691" y="230" width="74" height="19" fill="#8f9c94"/>
<rect x="692" y="231" width="72" height="17" fill="#ffffff"/>
<rect x="692" y="231" width="71" height="16" fill="#f4f0ea"/>
<rect x="693" y="232" width="70" height="15" fill="#edede4"/>
<text x="694.4" y="244" font-size="11" fill="#111111" stroke="#111111" stroke-width="0.15" letter-spacing="0.86">0000000000</text>
<text x="764.6" y="222.7" font-size="11" fill="#111111" stroke="#111111" stroke-width="0.15" letter-spacing="0.2">Pulse</text>
<text x="764.9" y="243.3" font-size="11" fill="#111111" stroke="#111111" stroke-width="0.15" letter-spacing="0.6">mm</text>
<rect x="793" y="208" width="23" height="41" fill="#aabdbd"/>
<rect x="794" y="209" width="21" height="39" fill="#dce5e5"/>
<rect x="690" y="250" width="65" height="21" fill="#b4c0b4"/>
<rect x="691" y="251" width="63" height="19" fill="#f6fff6"/>
<rect x="692" y="252" width="61" height="17" fill="#e9f2e9"/>
<rect x="756" y="250" width="60" height="21" fill="#b4c0b4"/>
<rect x="757" y="251" width="58" height="19" fill="#f6fff6"/>
<rect x="758" y="252" width="56" height="17" fill="#e9f2e9"/>
<rect x="695" y="254" width="25" height="1" fill="#9c9b34"/>
<rect x="695" y="266" width="25" height="1" fill="#9c9b34"/>
<rect x="693" y="256" width="1" height="9" fill="#9c9b34"/>
<rect x="721" y="256" width="1" height="9" fill="#9c9b34"/>
<rect x="694" y="255" width="1" height="1" fill="#9c9b34"/>
<rect x="720" y="255" width="1" height="1" fill="#9c9b34"/>
<rect x="694" y="265" width="1" height="1" fill="#9c9b34"/>
<rect x="720" y="265" width="1" height="1" fill="#9c9b34"/>
<path d="M695 255H720V256H721V265H720V266H695V265H694V256H695Z" fill="url(#gYel)"/>
<rect x="695" y="255" width="25" height="1" fill="rgba(255,255,255,0.7)"/>
<rect x="694" y="256" width="1" height="9" fill="rgba(255,255,255,0.7)"/>
<text x="707.5" y="265" font-size="11" fill="#101010" stroke="#101010" stroke-width="0.15" text-anchor="middle">Rel</text>
<rect x="725" y="254" width="25" height="1" fill="#5f5f97"/>
<rect x="725" y="266" width="25" height="1" fill="#5f5f97"/>
<rect x="723" y="256" width="1" height="9" fill="#5f5f97"/>
<rect x="751" y="256" width="1" height="9" fill="#5f5f97"/>
<rect x="724" y="255" width="1" height="1" fill="#5f5f97"/>
<rect x="750" y="255" width="1" height="1" fill="#5f5f97"/>
<rect x="724" y="265" width="1" height="1" fill="#5f5f97"/>
<rect x="750" y="265" width="1" height="1" fill="#5f5f97"/>
<path d="M725 255H750V256H751V265H750V266H725V265H724V256H725Z" fill="url(#gBlu)"/>
<rect x="725" y="255" width="25" height="1" fill="rgba(255,255,255,0.7)"/>
<rect x="724" y="256" width="1" height="9" fill="rgba(255,255,255,0.7)"/>
<text x="737.5" y="265" font-size="11" fill="#101010" stroke="#101010" stroke-width="0.15" text-anchor="middle">Abs</text>
<rect x="762" y="254" width="12" height="1" fill="#5f5f97"/>
<rect x="762" y="266" width="12" height="1" fill="#5f5f97"/>
<rect x="760" y="256" width="1" height="9" fill="#5f5f97"/>
<rect x="775" y="256" width="1" height="9" fill="#5f5f97"/>
<rect x="761" y="255" width="1" height="1" fill="#5f5f97"/>
<rect x="774" y="255" width="1" height="1" fill="#5f5f97"/>
<rect x="761" y="265" width="1" height="1" fill="#5f5f97"/>
<rect x="774" y="265" width="1" height="1" fill="#5f5f97"/>
<path d="M762 255H774V256H775V265H774V266H762V265H761V256H762Z" fill="url(#gBlu)"/>
<rect x="762" y="255" width="12" height="1" fill="rgba(255,255,255,0.7)"/>
<rect x="761" y="256" width="1" height="9" fill="rgba(255,255,255,0.7)"/>
<text x="768.0" y="265" font-size="11" fill="#101010" stroke="#101010" stroke-width="0.15" text-anchor="middle">H</text>
<rect x="780" y="254" width="12" height="1" fill="#9c9b34"/>
<rect x="780" y="266" width="12" height="1" fill="#9c9b34"/>
<rect x="778" y="256" width="1" height="9" fill="#9c9b34"/>
<rect x="793" y="256" width="1" height="9" fill="#9c9b34"/>
<rect x="779" y="255" width="1" height="1" fill="#9c9b34"/>
<rect x="792" y="255" width="1" height="1" fill="#9c9b34"/>
<rect x="779" y="265" width="1" height="1" fill="#9c9b34"/>
<rect x="792" y="265" width="1" height="1" fill="#9c9b34"/>
<path d="M780 255H792V256H793V265H792V266H780V265H779V256H780Z" fill="url(#gYel)"/>
<rect x="780" y="255" width="12" height="1" fill="rgba(255,255,255,0.7)"/>
<rect x="779" y="256" width="1" height="9" fill="rgba(255,255,255,0.7)"/>
<text x="786.0" y="265" font-size="11" fill="#101010" stroke="#101010" stroke-width="0.15" text-anchor="middle">M</text>
<rect x="798" y="254" width="12" height="1" fill="#5f5f97"/>
<rect x="798" y="266" width="12" height="1" fill="#5f5f97"/>
<rect x="796" y="256" width="1" height="9" fill="#5f5f97"/>
<rect x="811" y="256" width="1" height="9" fill="#5f5f97"/>
<rect x="797" y="255" width="1" height="1" fill="#5f5f97"/>
<rect x="810" y="255" width="1" height="1" fill="#5f5f97"/>
<rect x="797" y="265" width="1" height="1" fill="#5f5f97"/>
<rect x="810" y="265" width="1" height="1" fill="#5f5f97"/>
<path d="M798 255H810V256H811V265H810V266H798V265H797V256H798Z" fill="url(#gBlu)"/>
<rect x="798" y="255" width="12" height="1" fill="rgba(255,255,255,0.7)"/>
<rect x="797" y="256" width="1" height="9" fill="rgba(255,255,255,0.7)"/>
<text x="804.0" y="265" font-size="11" fill="#101010" stroke="#101010" stroke-width="0.15" text-anchor="middle">L</text>
<path d="M692 274H778V275H779V293H778V294H692V293H691V275H692Z" fill="url(#gCmb)"/>
<rect x="691" y="274" width="68" height="20" fill="#ffffff"/>
<rect x="692" y="273" width="86" height="1" fill="#8b8b8b"/>
<rect x="692" y="294" width="86" height="1" fill="#8b8b8b"/>
<rect x="690" y="275" width="1" height="18" fill="#8b8b8b"/>
<rect x="779" y="275" width="1" height="18" fill="#8b8b8b"/>
<rect x="691" y="274" width="1" height="1" fill="#8b8b8b"/>
<rect x="778" y="274" width="1" height="1" fill="#8b8b8b"/>
<rect x="691" y="293" width="1" height="1" fill="#8b8b8b"/>
<rect x="778" y="293" width="1" height="1" fill="#8b8b8b"/>
<rect x="759" y="274" width="1" height="20" fill="#d0d0d0"/>
<path d="M764.3 283.8L765.7 282.4L768.5 285.2L771.3 282.4L772.7 283.8L768.5 288Z" fill="#000" stroke="#000" stroke-width="0.6" stroke-linejoin="round"/>
<path d="M692 299H778V300H779V318H778V319H692V318H691V300H692Z" fill="url(#gCmb)"/>
<rect x="691" y="299" width="68" height="20" fill="#ffffff"/>
<rect x="692" y="298" width="86" height="1" fill="#8b8b8b"/>
<rect x="692" y="319" width="86" height="1" fill="#8b8b8b"/>
<rect x="690" y="300" width="1" height="18" fill="#8b8b8b"/>
<rect x="779" y="300" width="1" height="18" fill="#8b8b8b"/>
<rect x="691" y="299" width="1" height="1" fill="#8b8b8b"/>
<rect x="778" y="299" width="1" height="1" fill="#8b8b8b"/>
<rect x="691" y="318" width="1" height="1" fill="#8b8b8b"/>
<rect x="778" y="318" width="1" height="1" fill="#8b8b8b"/>
<rect x="759" y="299" width="1" height="20" fill="#d0d0d0"/>
<path d="M764.3 308.8L765.7 307.4L768.5 310.2L771.3 307.4L772.7 308.8L768.5 313Z" fill="#000" stroke="#000" stroke-width="0.6" stroke-linejoin="round"/>
<text x="780.7" y="287.8" font-size="11" fill="#111111" stroke="#111111" stroke-width="0.15" letter-spacing="0.3">Pulse</text>
<text x="781.0" y="312.8" font-size="11" fill="#111111" stroke="#111111" stroke-width="0.15" letter-spacing="0.6">mm</text>
<rect x="821" y="180" width="134" height="145" fill="#939d94"/>
<rect x="821" y="180" width="133" height="144" fill="#ffffff"/>
<rect x="822" y="181" width="132" height="143" fill="#e9f2e9"/>
<rect x="825" y="184" width="86" height="24" fill="rgba(255,255,255,0.55)"/>
<rect x="825" y="184" width="85" height="23" fill="#ffffff"/>
<rect x="826" y="185" width="84" height="22" fill="url(#gBtn)"/>
<rect x="826" y="185" width="82" height="1" fill="#000000"/>
<rect x="826" y="185" width="1" height="20" fill="#000000"/>
<rect x="827" y="186" width="81" height="1" fill="#ffffff"/>
<rect x="827" y="186" width="1" height="19" fill="#f4f4f4"/>
<rect x="908" y="184" width="1" height="23" fill="#a9a9a9"/>
<rect x="825" y="205" width="85" height="1" fill="#a9a9a9"/>
<rect x="909" y="184" width="1" height="23" fill="#6f6f6f"/>
<rect x="825" y="206" width="85" height="1" fill="#6f6f6f"/>
<text x="867.7" y="200" font-size="11" fill="#111111" stroke="#111111" stroke-width="0.15" text-anchor="middle" letter-spacing="0.4">X</text>
<rect x="911" y="184" width="41" height="24" fill="rgba(255,255,255,0.55)"/>
<rect x="911" y="184" width="40" height="23" fill="#ffffff"/>
<rect x="912" y="185" width="39" height="22" fill="url(#gBtn)"/>
<rect x="912" y="185" width="37" height="1" fill="#000000"/>
<rect x="912" y="185" width="1" height="20" fill="#000000"/>
<rect x="913" y="186" width="36" height="1" fill="#ffffff"/>
<rect x="913" y="186" width="1" height="19" fill="#f4f4f4"/>
<rect x="949" y="184" width="1" height="23" fill="#a9a9a9"/>
<rect x="911" y="205" width="40" height="1" fill="#a9a9a9"/>
<rect x="950" y="184" width="1" height="23" fill="#6f6f6f"/>
<rect x="911" y="206" width="40" height="1" fill="#6f6f6f"/>
<text x="931.2" y="200" font-size="11" fill="#111111" stroke="#111111" stroke-width="0.15" text-anchor="middle" letter-spacing="0">Go</text>
<rect x="825" y="208" width="75" height="21" fill="#ffffff"/>
<rect x="826" y="209" width="74" height="20" fill="#8f9c94"/>
<rect x="827" y="210" width="72" height="18" fill="#ffffff"/>
<rect x="827" y="210" width="71" height="17" fill="#f4f0ea"/>
<rect x="828" y="211" width="70" height="16" fill="#edede4"/>
<text x="829.4" y="223" font-size="11" fill="#111111" stroke="#111111" stroke-width="0.15" letter-spacing="0.86">0000000000</text>
<rect x="825" y="229" width="75" height="20" fill="#ffffff"/>
<rect x="826" y="230" width="74" height="19" fill="#8f9c94"/>
<rect x="827" y="231" width="72" height="17" fill="#ffffff"/>
<rect x="827" y="231" width="71" height="16" fill="#f4f0ea"/>
<rect x="828" y="232" width="70" height="15" fill="#edede4"/>
<text x="829.4" y="244" font-size="11" fill="#111111" stroke="#111111" stroke-width="0.15" letter-spacing="0.86">0000000000</text>
<text x="899.6" y="222.7" font-size="11" fill="#111111" stroke="#111111" stroke-width="0.15" letter-spacing="0.2">Pulse</text>
<text x="899.9" y="243.3" font-size="11" fill="#111111" stroke="#111111" stroke-width="0.15" letter-spacing="0.6">mm</text>
<rect x="928" y="208" width="23" height="41" fill="#aabdbd"/>
<rect x="929" y="209" width="21" height="39" fill="#dce5e5"/>
<rect x="825" y="250" width="65" height="21" fill="#b4c0b4"/>
<rect x="826" y="251" width="63" height="19" fill="#f6fff6"/>
<rect x="827" y="252" width="61" height="17" fill="#e9f2e9"/>
<rect x="891" y="250" width="60" height="21" fill="#b4c0b4"/>
<rect x="892" y="251" width="58" height="19" fill="#f6fff6"/>
<rect x="893" y="252" width="56" height="17" fill="#e9f2e9"/>
<rect x="830" y="254" width="25" height="1" fill="#9c9b34"/>
<rect x="830" y="266" width="25" height="1" fill="#9c9b34"/>
<rect x="828" y="256" width="1" height="9" fill="#9c9b34"/>
<rect x="856" y="256" width="1" height="9" fill="#9c9b34"/>
<rect x="829" y="255" width="1" height="1" fill="#9c9b34"/>
<rect x="855" y="255" width="1" height="1" fill="#9c9b34"/>
<rect x="829" y="265" width="1" height="1" fill="#9c9b34"/>
<rect x="855" y="265" width="1" height="1" fill="#9c9b34"/>
<path d="M830 255H855V256H856V265H855V266H830V265H829V256H830Z" fill="url(#gYel)"/>
<rect x="830" y="255" width="25" height="1" fill="rgba(255,255,255,0.7)"/>
<rect x="829" y="256" width="1" height="9" fill="rgba(255,255,255,0.7)"/>
<text x="842.5" y="265" font-size="11" fill="#101010" stroke="#101010" stroke-width="0.15" text-anchor="middle">Rel</text>
<rect x="860" y="254" width="25" height="1" fill="#5f5f97"/>
<rect x="860" y="266" width="25" height="1" fill="#5f5f97"/>
<rect x="858" y="256" width="1" height="9" fill="#5f5f97"/>
<rect x="886" y="256" width="1" height="9" fill="#5f5f97"/>
<rect x="859" y="255" width="1" height="1" fill="#5f5f97"/>
<rect x="885" y="255" width="1" height="1" fill="#5f5f97"/>
<rect x="859" y="265" width="1" height="1" fill="#5f5f97"/>
<rect x="885" y="265" width="1" height="1" fill="#5f5f97"/>
<path d="M860 255H885V256H886V265H885V266H860V265H859V256H860Z" fill="url(#gBlu)"/>
<rect x="860" y="255" width="25" height="1" fill="rgba(255,255,255,0.7)"/>
<rect x="859" y="256" width="1" height="9" fill="rgba(255,255,255,0.7)"/>
<text x="872.5" y="265" font-size="11" fill="#101010" stroke="#101010" stroke-width="0.15" text-anchor="middle">Abs</text>
<rect x="897" y="254" width="12" height="1" fill="#5f5f97"/>
<rect x="897" y="266" width="12" height="1" fill="#5f5f97"/>
<rect x="895" y="256" width="1" height="9" fill="#5f5f97"/>
<rect x="910" y="256" width="1" height="9" fill="#5f5f97"/>
<rect x="896" y="255" width="1" height="1" fill="#5f5f97"/>
<rect x="909" y="255" width="1" height="1" fill="#5f5f97"/>
<rect x="896" y="265" width="1" height="1" fill="#5f5f97"/>
<rect x="909" y="265" width="1" height="1" fill="#5f5f97"/>
<path d="M897 255H909V256H910V265H909V266H897V265H896V256H897Z" fill="url(#gBlu)"/>
<rect x="897" y="255" width="12" height="1" fill="rgba(255,255,255,0.7)"/>
<rect x="896" y="256" width="1" height="9" fill="rgba(255,255,255,0.7)"/>
<text x="903.0" y="265" font-size="11" fill="#101010" stroke="#101010" stroke-width="0.15" text-anchor="middle">H</text>
<rect x="915" y="254" width="12" height="1" fill="#9c9b34"/>
<rect x="915" y="266" width="12" height="1" fill="#9c9b34"/>
<rect x="913" y="256" width="1" height="9" fill="#9c9b34"/>
<rect x="928" y="256" width="1" height="9" fill="#9c9b34"/>
<rect x="914" y="255" width="1" height="1" fill="#9c9b34"/>
<rect x="927" y="255" width="1" height="1" fill="#9c9b34"/>
<rect x="914" y="265" width="1" height="1" fill="#9c9b34"/>
<rect x="927" y="265" width="1" height="1" fill="#9c9b34"/>
<path d="M915 255H927V256H928V265H927V266H915V265H914V256H915Z" fill="url(#gYel)"/>
<rect x="915" y="255" width="12" height="1" fill="rgba(255,255,255,0.7)"/>
<rect x="914" y="256" width="1" height="9" fill="rgba(255,255,255,0.7)"/>
<text x="921.0" y="265" font-size="11" fill="#101010" stroke="#101010" stroke-width="0.15" text-anchor="middle">M</text>
<rect x="933" y="254" width="12" height="1" fill="#5f5f97"/>
<rect x="933" y="266" width="12" height="1" fill="#5f5f97"/>
<rect x="931" y="256" width="1" height="9" fill="#5f5f97"/>
<rect x="946" y="256" width="1" height="9" fill="#5f5f97"/>
<rect x="932" y="255" width="1" height="1" fill="#5f5f97"/>
<rect x="945" y="255" width="1" height="1" fill="#5f5f97"/>
<rect x="932" y="265" width="1" height="1" fill="#5f5f97"/>
<rect x="945" y="265" width="1" height="1" fill="#5f5f97"/>
<path d="M933 255H945V256H946V265H945V266H933V265H932V256H933Z" fill="url(#gBlu)"/>
<rect x="933" y="255" width="12" height="1" fill="rgba(255,255,255,0.7)"/>
<rect x="932" y="256" width="1" height="9" fill="rgba(255,255,255,0.7)"/>
<text x="939.0" y="265" font-size="11" fill="#101010" stroke="#101010" stroke-width="0.15" text-anchor="middle">L</text>
<path d="M827 274H913V275H914V293H913V294H827V293H826V275H827Z" fill="url(#gCmb)"/>
<rect x="826" y="274" width="68" height="20" fill="#ffffff"/>
<rect x="827" y="273" width="86" height="1" fill="#8b8b8b"/>
<rect x="827" y="294" width="86" height="1" fill="#8b8b8b"/>
<rect x="825" y="275" width="1" height="18" fill="#8b8b8b"/>
<rect x="914" y="275" width="1" height="18" fill="#8b8b8b"/>
<rect x="826" y="274" width="1" height="1" fill="#8b8b8b"/>
<rect x="913" y="274" width="1" height="1" fill="#8b8b8b"/>
<rect x="826" y="293" width="1" height="1" fill="#8b8b8b"/>
<rect x="913" y="293" width="1" height="1" fill="#8b8b8b"/>
<rect x="894" y="274" width="1" height="20" fill="#d0d0d0"/>
<path d="M899.3 283.8L900.7 282.4L903.5 285.2L906.3 282.4L907.7 283.8L903.5 288Z" fill="#000" stroke="#000" stroke-width="0.6" stroke-linejoin="round"/>
<path d="M827 299H913V300H914V318H913V319H827V318H826V300H827Z" fill="url(#gCmb)"/>
<rect x="826" y="299" width="68" height="20" fill="#ffffff"/>
<rect x="827" y="298" width="86" height="1" fill="#8b8b8b"/>
<rect x="827" y="319" width="86" height="1" fill="#8b8b8b"/>
<rect x="825" y="300" width="1" height="18" fill="#8b8b8b"/>
<rect x="914" y="300" width="1" height="18" fill="#8b8b8b"/>
<rect x="826" y="299" width="1" height="1" fill="#8b8b8b"/>
<rect x="913" y="299" width="1" height="1" fill="#8b8b8b"/>
<rect x="826" y="318" width="1" height="1" fill="#8b8b8b"/>
<rect x="913" y="318" width="1" height="1" fill="#8b8b8b"/>
<rect x="894" y="299" width="1" height="20" fill="#d0d0d0"/>
<path d="M899.3 308.8L900.7 307.4L903.5 310.2L906.3 307.4L907.7 308.8L903.5 313Z" fill="#000" stroke="#000" stroke-width="0.6" stroke-linejoin="round"/>
<text x="915.7" y="287.8" font-size="11" fill="#111111" stroke="#111111" stroke-width="0.15" letter-spacing="0.3">Pulse</text>
<text x="916.0" y="312.8" font-size="11" fill="#111111" stroke="#111111" stroke-width="0.15" letter-spacing="0.6">mm</text>
<text x="283.5" y="46.5" font-size="11" fill="#111111" stroke="#111111" stroke-width="0.15" letter-spacing="0.62">Bend Monochro</text>
<rect x="283" y="54" width="120" height="270" fill="#ffffff"/>
<g fill="none">
<path d="M343.5 98V160" stroke="#000" stroke-width="1.2" shape-rendering="crispEdges" stroke-dasharray="4 2 1 2" stroke-dashoffset="2"/>
<path d="M303 138L343.3 151.7M303 138V175.8L343 170.6" stroke="#f78a8a" stroke-width="2" shape-rendering="crispEdges"/>
<path d="M343.3 151.7L382.2 165L343 170.6" stroke="#b6b6f6" stroke-width="2" shape-rendering="crispEdges"/>
<path d="M330 179.4L355.6 143.3" stroke="#f4a8a8" stroke-width="1" stroke-dasharray="2 2.5"/>
<path d="M290 156.2L388 166.5" stroke="#f9d8a8" stroke-width="2" shape-rendering="crispEdges"/>
<path d="M348 167.5L380 164.5M346 162.5L380 166" stroke="#f4a0a0" stroke-width="1" stroke-dasharray="3 4"/>
<path d="M386.7 162.2L395.5 167.2L386.7 170.6Z" fill="#f9d8a8"/>
<path d="M343 161.5V257" stroke="#0a8a0a" stroke-width="2" shape-rendering="crispEdges"/>
<path d="M296.5 252L390 262" stroke="#000" stroke-width="1" shape-rendering="crispEdges" stroke-dasharray="4 2 1 2"/>
<path d="M343.5 257V290" stroke="#000" stroke-width="1" shape-rendering="crispEdges" stroke-dasharray="4 2 1 2"/>
<path d="M330.5 274.5L356 238" stroke="#000" stroke-width="1" shape-rendering="crispEdges" stroke-dasharray="3 3.5"/>
</g>
<text x="553.4" y="49" font-size="11" fill="#111111" stroke="#111111" stroke-width="0.15" letter-spacing="0.28">Main Stage</text>
<rect x="554" y="56" width="128" height="84" fill="#ffffff"/>
<g fill="none">
<path d="M561.5 70L670 79" stroke="#f8d7a8" stroke-width="2"/>
<path d="M666 75L674 79.5L666 83Z" fill="#f8d7a8"/>
<path d="M618.5 56V125" stroke="#000" stroke-width="1" shape-rendering="crispEdges" stroke-dasharray="4 2 1 2"/>
<path d="M568 118.5V83" stroke="#f8a65a" stroke-width="2"/>
<path d="M563.5 85L568 79L572.5 85Z" fill="#f7a75c"/>
<path d="M585.8 118.6L666 125.1" stroke="#000" stroke-width="1" shape-rendering="crispEdges" stroke-dasharray="4 2 1 2"/>
<path d="M604.4 136.3L630.6 108.3" stroke="#000" stroke-width="1" shape-rendering="crispEdges" stroke-dasharray="3 3.5"/>
<path d="M569 97H675V118H569 M569 97L660.5 112V132.5L569 118 M660.5 112L675 97 M660.5 132.5L675 118" stroke="#58a6f6" stroke-width="2" shape-rendering="crispEdges"/>
</g>
<rect x="554" y="140" width="127" height="12" fill="#a8a8a0"/>
<rect x="555" y="141" width="125" height="10" fill="#fbf9d6"/>
<text x="556.2" y="150.5" font-size="11" fill="#1c1c1c" stroke="#1c1c1c" stroke-width="0.15" letter-spacing="1.0">Z:</text>
<path d="M615 156H680V157H681V171H680V172H615V171H614V157H615Z" fill="url(#gCmb)"/>
<rect x="614" y="156" width="46" height="16" fill="#ffffff"/>
<rect x="615" y="155" width="65" height="1" fill="#8b8b8b"/>
<rect x="615" y="172" width="65" height="1" fill="#8b8b8b"/>
<rect x="613" y="157" width="1" height="14" fill="#8b8b8b"/>
<rect x="681" y="157" width="1" height="14" fill="#8b8b8b"/>
<rect x="614" y="156" width="1" height="1" fill="#8b8b8b"/>
<rect x="680" y="156" width="1" height="1" fill="#8b8b8b"/>
<rect x="614" y="171" width="1" height="1" fill="#8b8b8b"/>
<rect x="680" y="171" width="1" height="1" fill="#8b8b8b"/>
<rect x="660" y="156" width="1" height="16" fill="#d0d0d0"/>
<text x="617.4" y="168" font-size="11" fill="#111111" stroke="#111111" stroke-width="0.15" letter-spacing="0.65">no link</text>
<path d="M666.5 162L670.5 158L674.5 162Z M666.5 165L670.5 169L674.5 165Z" fill="#000"/>
<rect x="3" y="336" width="879" height="85" fill="#a9a58e"/>
<rect x="4" y="337" width="877" height="83" fill="#ebe7d6"/>
<rect x="5" y="338" width="875" height="81" fill="#dfdcca"/>
<rect x="8" y="341" width="869" height="75" fill="#b5b498"/>
<rect x="9" y="342" width="867" height="73" fill="#fffde8"/>
<text x="14.0" y="356.7" font-size="11" fill="#111111" stroke="#111111" stroke-width="0.15" letter-spacing="0.85">19:46:59&gt;</text>
<text x="74.5" y="356.7" font-size="11" fill="#111111" stroke="#111111" stroke-width="0.15" letter-spacing="0.5">Connecting</text>
<text x="137.3" y="356.7" font-size="11" fill="#111111" stroke="#111111" stroke-width="0.15" letter-spacing="0">Stars</text>
<text x="165.5" y="356.7" font-size="11" fill="#111111" stroke="#111111" stroke-width="0.15" letter-spacing="0">Server</text>
<text x="199.9" y="356.7" font-size="11" fill="#111111" stroke="#111111" stroke-width="0.15" letter-spacing="0.45">[localhost]</text>
<text x="256.4" y="356.7" font-size="11" fill="#111111" stroke="#111111" stroke-width="0.15" letter-spacing="0.65">[6057]</text>
<text x="294.5" y="356.7" font-size="11" fill="#111111" stroke="#111111" stroke-width="0.15" letter-spacing="0">as</text>
<text x="307.7" y="356.7" font-size="11" fill="#111111" stroke="#111111" stroke-width="0.15" letter-spacing="0.33">[BLC2EndStation]</text>
<rect x="14" y="358" width="1" height="11" fill="#000"/>
<rect x="883" y="417" width="81" height="1" fill="#f4f2e6"/>
<rect x="963" y="339" width="1" height="79" fill="#f4f2e6"/>
<path d="M885 339H961L963 341V415L961 417H885L883 415V341Z" fill="#9c0000"/>
<path d="M885 340H961L962 341V415L961 416H885L884 415V341Z" fill="url(#gStop)"/>
<rect x="884" y="341" width="1" height="74" fill="#ff7070"/>
<text transform="translate(922.8 384.8) scale(0.96 1.12)" font-size="21" font-family="Liberation Mono" fill="#111" stroke="#111" stroke-width="0.35" text-anchor="middle">STOP!</text>
<text x="7.5" y="441.5" font-size="11" fill="#1a1a1a" stroke="#1a1a1a" stroke-width="0.15" letter-spacing="0.95">2014</text>
<text x="38.3" y="441.5" font-size="11" fill="#1a1a1a" stroke="#1a1a1a" stroke-width="0.15">7</text>
<g fill="none" stroke="#1a1a1a" stroke-width="1.1"><path d="M47.8 433.5V438.6Q47.6 441 46 442.6M47.8 433.5H53.4V442.3Q53.3 442.9 52 442.6M47.8 436.4H53.4M47.8 438.7H53.4"/><path d="M82.4 433V442.3Q82.3 443 81 442.6M78.3 435.4H80.8Q79.9 439.3 77.6 441.5M82.4 438.2L86.2 435M82.6 437.2Q84.6 439.6 87 441"/></g>
<text x="58.4" y="441.5" font-size="11" fill="#1a1a1a" stroke="#1a1a1a" stroke-width="0.15" letter-spacing="0.9">02</text>
<text x="73.0" y="441.5" font-size="11" fill="#1a1a1a" stroke="#1a1a1a" stroke-width="0.15">(</text>
<text x="87.8" y="441.5" font-size="11" fill="#1a1a1a" stroke="#1a1a1a" stroke-width="0.15">)</text>
<text x="98.0" y="441.5" font-size="11" fill="#1a1a1a" stroke="#1a1a1a" stroke-width="0.15" letter-spacing="0.85">19:47:10</text></svg>
</body></html>
